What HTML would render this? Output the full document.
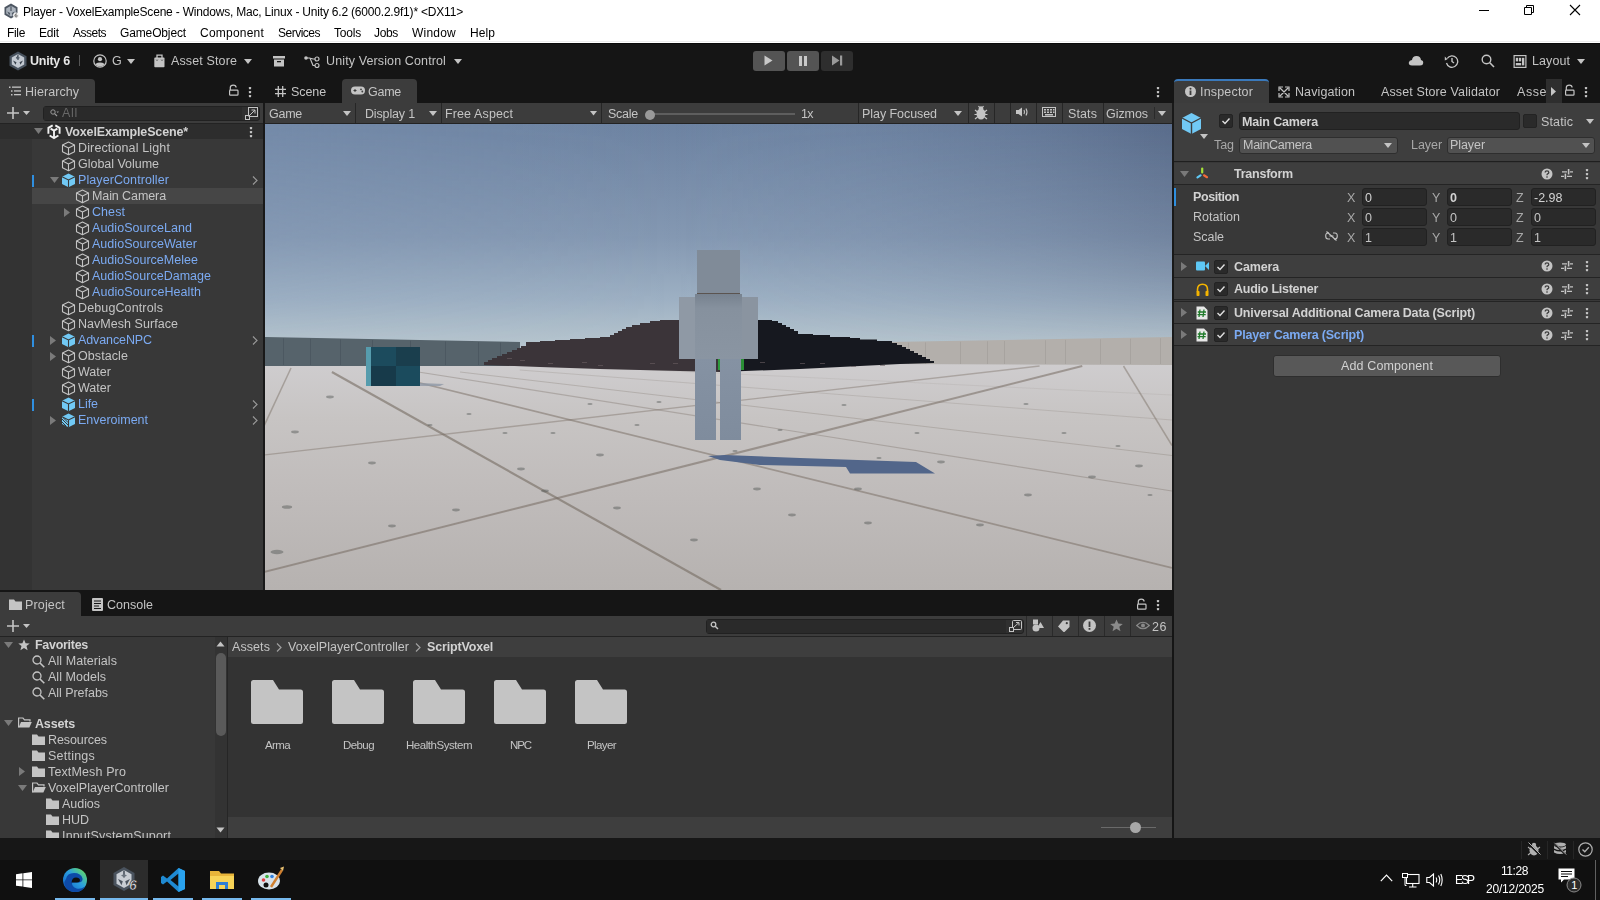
<!DOCTYPE html>
<html><head><meta charset="utf-8">
<style>
*{box-sizing:border-box;margin:0;padding:0}
html,body{width:1600px;height:900px;overflow:hidden;background:#191919;font-family:"Liberation Sans",sans-serif;color:#c4c4c4}
.a{position:absolute;display:block}
.t{position:absolute;white-space:nowrap;line-height:1;will-change:transform}
</style></head><body>
<div class="a" style="left:0px;top:0px;width:1600px;height:43px;background:#ffffff;"></div>
<div class="a" style="left:0px;top:41px;width:1600px;height:1px;background:#ececec;"></div>
<svg class="a" style="left:3px;top:3px;" width="16" height="16" viewBox="0 0 16 16"><path d="M8 0.5L14.5 4.2V11.8L8 15.5L1.5 11.8V4.2Z" fill="#4d5662"/><path d="M8 2.8L12.8 5.6V10.6L8 13.4L3.2 10.6V5.6Z" fill="#aab2bc"/><path d="M7.4 3.2H8.6V8H7.4Z M4.2 8.5L7.2 10L6.3 12.4Z M11.8 8.5L8.8 10L9.7 12.4Z" fill="#4d5662"/><circle cx="13" cy="12.3" r="2.9" fill="#f2f2f2"/><path d="M13.6 10.6Q12 10.8 12 12.6Q12 14 13.1 14Q14.2 14 14.2 12.9Q14.2 11.9 13.1 11.9Q12.4 11.9 12.1 12.5" fill="none" stroke="#555" stroke-width="0.8"/></svg>
<div class="t" style="left:23px;top:5.84px;font-size:12px;color:#000;letter-spacing:-0.198px;">Player - VoxelExampleScene - Windows, Mac, Linux - Unity 6.2 (6000.2.9f1)* &lt;DX11&gt;</div>
<div class="t" style="left:7px;top:26.84px;font-size:12px;color:#000;letter-spacing:-0.334px;">File</div>
<div class="t" style="left:39px;top:26.84px;font-size:12px;color:#000;letter-spacing:-0.170px;">Edit</div>
<div class="t" style="left:73px;top:26.84px;font-size:12px;color:#000;letter-spacing:-0.502px;">Assets</div>
<div class="t" style="left:120px;top:26.84px;font-size:12px;color:#000;letter-spacing:-0.136px;">GameObject</div>
<div class="t" style="left:200px;top:26.84px;font-size:12px;color:#000;letter-spacing:0.218px;">Component</div>
<div class="t" style="left:278px;top:26.84px;font-size:12px;color:#000;letter-spacing:-0.502px;">Services</div>
<div class="t" style="left:334px;top:26.84px;font-size:12px;color:#000;letter-spacing:-0.203px;">Tools</div>
<div class="t" style="left:374px;top:26.84px;font-size:12px;color:#000;letter-spacing:-0.337px;">Jobs</div>
<div class="t" style="left:412px;top:26.84px;font-size:12px;color:#000;letter-spacing:0.220px;">Window</div>
<div class="t" style="left:470px;top:26.84px;font-size:12px;color:#000;letter-spacing:0.080px;">Help</div>
<div class="a" style="left:1479px;top:10px;width:10px;height:1px;background:#000;"></div>
<svg class="a" style="left:1522px;top:4px;" width="12" height="12" viewBox="0 0 12 12"><path d="M2.5 3.5H9.5V10.5H2.5Z M4.5 3.5V1.5H11.5V8.5H9.5" fill="none" stroke="#000" stroke-width="1"/></svg>
<svg class="a" style="left:1569px;top:4px;" width="12" height="12" viewBox="0 0 12 12"><path d="M1 1L11 11M11 1L1 11" stroke="#000" stroke-width="1.1"/></svg>
<div class="a" style="left:0px;top:43px;width:1600px;height:795px;background:#151515;"></div>
<div class="a" style="left:0px;top:43px;width:1600px;height:1px;background:#0a0a0a;"></div>
<svg class="a" style="left:9px;top:51px;" width="18" height="20" viewBox="0 0 18 20"><path d="M9 0.5L17.5 5.3V14.7L9 19.5L0.5 14.7V5.3Z" fill="#48525e"/><path d="M9 3L15.2 6.5V13.5L9 17L2.8 13.5V6.5Z" fill="#c3c9d1"/><path d="M9 4.2V8.2L6.8 7Z M9 8.2L11.2 7Z" fill="#48525e"/><path d="M8.4 3.6H9.6V9H8.4Z" fill="#48525e"/><path d="M4 9.5L7.5 11.3L6.5 13.8Z M14 9.5L10.5 11.3L11.5 13.8Z" fill="#3a434e"/><path d="M6.8 6.8L9 8.2L11.2 6.8L9 6Z" fill="#5a6470"/></svg>
<div class="t" style="left:30px;top:55.42px;font-size:12.5px;color:#e6e6e6;font-weight:bold;letter-spacing:-0.239px;">Unity 6</div>
<div class="a" style="left:79px;top:55px;width:1px;height:11px;background:#555;"></div>
<svg class="a" style="left:93px;top:54px;" width="14" height="14" viewBox="0 0 14 14"><defs><clipPath id="acc"><circle cx="7" cy="7" r="5.6"/></clipPath></defs><circle cx="7" cy="7" r="6.2" fill="none" stroke="#c4c4c4" stroke-width="1.2"/><circle cx="7" cy="5.2" r="2.1" fill="#c4c4c4"/><g clip-path="url(#acc)"><ellipse cx="7" cy="13" rx="6" ry="4.6" fill="#c4c4c4"/></g></svg>
<div class="t" style="left:112px;top:55.42px;font-size:12.5px;color:#c4c4c4;">G</div>
<svg class="a" style="left:127px;top:59px;" width="8" height="5" viewBox="0 0 8 5"><path d="M0 0H8L4.0 5Z" fill="#c4c4c4"/></svg>
<svg class="a" style="left:154px;top:54px;" width="11" height="14" viewBox="0 0 11 14"><path d="M3 4V1.2H8V4" fill="none" stroke="#c4c4c4" stroke-width="1.3"/><rect x="0.3" y="3.6" width="10.2" height="9.6" rx="0.8" fill="#c4c4c4"/><path d="M2.2 5.6L3 6.6L3.8 5.6M7.2 5.6L8 6.6L8.8 5.6" fill="none" stroke="#151515" stroke-width="0.6"/></svg>
<div class="t" style="left:171px;top:55.42px;font-size:12.5px;color:#c4c4c4;letter-spacing:0.126px;">Asset Store</div>
<svg class="a" style="left:244px;top:59px;" width="8" height="5" viewBox="0 0 8 5"><path d="M0 0H8L4.0 5Z" fill="#c4c4c4"/></svg>
<svg class="a" style="left:273px;top:56px;" width="12" height="11" viewBox="0 0 12 11"><rect x="0" y="0" width="12" height="2.5" fill="#c4c4c4"/><rect x="1" y="3.5" width="10" height="7" fill="#c4c4c4"/><rect x="4" y="5" width="4" height="1.3" fill="#191919"/></svg>
<svg class="a" style="left:304px;top:56px;" width="16" height="12" viewBox="0 0 16 12"><circle cx="2" cy="2" r="1.8" fill="#c4c4c4"/><circle cx="13" cy="3" r="2" fill="none" stroke="#c4c4c4" stroke-width="1.2"/><circle cx="13" cy="9.5" r="2" fill="none" stroke="#c4c4c4" stroke-width="1.2"/><path d="M2 2H6L9 9.5H11M6 2L9 3H11" fill="none" stroke="#c4c4c4" stroke-width="1.2"/></svg>
<div class="t" style="left:326px;top:55.42px;font-size:12.5px;color:#c4c4c4;letter-spacing:0.123px;">Unity Version Control</div>
<svg class="a" style="left:454px;top:59px;" width="8" height="5" viewBox="0 0 8 5"><path d="M0 0H8L4.0 5Z" fill="#c4c4c4"/></svg>
<div class="a" style="left:753px;top:51px;width:32px;height:20px;background:#545454;border-radius:3px"></div>
<div class="a" style="left:787px;top:51px;width:32px;height:20px;background:#545454;border-radius:3px"></div>
<div class="a" style="left:821px;top:51px;width:32px;height:20px;background:#2e2e2e;border-radius:3px"></div>
<svg class="a" style="left:764px;top:55px;" width="9" height="11" viewBox="0 0 9 11"><path d="M0.5 0.5L8.5 5.5L0.5 10.5Z" fill="#c8c8c8"/></svg>
<svg class="a" style="left:799px;top:56px;" width="8" height="10" viewBox="0 0 8 10"><rect x="0" y="0" width="3" height="10" fill="#c8c8c8"/><rect x="5" y="0" width="3" height="10" fill="#c8c8c8"/></svg>
<svg class="a" style="left:832px;top:55px;" width="11" height="11" viewBox="0 0 11 11"><path d="M0 0.5L7.5 5.5L0 10.5Z" fill="#9a9a9a"/><rect x="8" y="0.5" width="2.2" height="10" fill="#9a9a9a"/></svg>
<svg class="a" style="left:1408px;top:55px;" width="16" height="11" viewBox="0 0 16 11"><path d="M4 10.5Q0.5 10.5 0.8 7.5Q1.2 5 4 5Q4.5 1 8.5 1Q12.5 1 13 5Q15.5 5.5 15.2 8Q15 10.5 12 10.5Z" fill="#c4c4c4"/></svg>
<svg class="a" style="left:1444px;top:54px;" width="15" height="14" viewBox="0 0 15 14"><path d="M3.2 4.5A5.7 5.7 0 1 1 2.5 9" fill="none" stroke="#c4c4c4" stroke-width="1.3"/><path d="M0.8 2.5L3.5 5.2L0.8 6.5Z" fill="#c4c4c4"/><path d="M8 4V7.5L10 9" fill="none" stroke="#c4c4c4" stroke-width="1.4"/></svg>
<svg class="a" style="left:1481px;top:54px;" width="14" height="14" viewBox="0 0 14 14"><circle cx="5.5" cy="5.5" r="4.3" fill="none" stroke="#c4c4c4" stroke-width="1.4"/><path d="M8.8 8.8L13 13" stroke="#c4c4c4" stroke-width="1.6"/></svg>
<svg class="a" style="left:1513px;top:54px;" width="14" height="14" viewBox="0 0 14 14"><rect x="1.1" y="1.6" width="11.8" height="11.8" fill="none" stroke="#c4c4c4" stroke-width="1.2"/><rect x="2.8" y="3.8" width="2.3" height="3.6" fill="#c4c4c4"/><rect x="5.9" y="3.8" width="2.3" height="3.6" fill="#c4c4c4"/><rect x="9" y="3.8" width="2.3" height="7.6" fill="#c4c4c4"/><rect x="2.8" y="9" width="5.4" height="2.4" fill="#c4c4c4"/></svg>
<div class="t" style="left:1532px;top:55.42px;font-size:12.5px;color:#c4c4c4;letter-spacing:0.079px;">Layout</div>
<svg class="a" style="left:1577px;top:59px;" width="8" height="5" viewBox="0 0 8 5"><path d="M0 0H8L4.0 5Z" fill="#c4c4c4"/></svg>
<div class="a" style="left:0;top:79px;width:95px;height:24px;background:#3c3c3c;border-radius:0 4px 0 0"></div>
<svg class="a" style="left:9px;top:86px;" width="12" height="10" viewBox="0 0 12 10"><g fill="#c4c4c4"><rect x="0" y="0.5" width="1.5" height="1.5"/><rect x="3" y="0.5" width="9" height="1.3"/><rect x="2" y="4.3" width="1.5" height="1.5"/><rect x="5" y="4.3" width="7" height="1.3"/><rect x="2" y="8" width="1.5" height="1.5"/><rect x="5" y="8" width="7" height="1.3"/></g></svg>
<div class="t" style="left:25px;top:86.42px;font-size:12.5px;color:#c4c4c4;letter-spacing:0.057px;">Hierarchy</div>
<svg class="a" style="left:229px;top:84px;" width="10" height="12" viewBox="0 0 10 12"><path d="M1.3 6V3.6Q1.3 1.1 4.2 1.1Q7.1 1.1 7.1 3.4" fill="none" stroke="#c4c4c4" stroke-width="1.2"/><rect x="0.6" y="6.2" width="8.4" height="5" rx="0.8" fill="none" stroke="#c4c4c4" stroke-width="1.2"/></svg>
<svg class="a" style="left:248px;top:86px;" width="4" height="12" viewBox="0 0 4 12"><rect x="0.9" y="1" width="2.2" height="2.2" rx="0.4" fill="#c4c4c4"/><rect x="0.9" y="5" width="2.2" height="2.2" rx="0.4" fill="#c4c4c4"/><rect x="0.9" y="9" width="2.2" height="2.2" rx="0.4" fill="#c4c4c4"/></svg>
<svg class="a" style="left:275px;top:86px;" width="11" height="11" viewBox="0 0 11 11"><path d="M3.3 0V11M7.7 0V11M0 3.3H11M0 7.7H11" stroke="#c4c4c4" stroke-width="1.3"/></svg>
<div class="t" style="left:291px;top:86.42px;font-size:12.5px;color:#c4c4c4;letter-spacing:-0.088px;">Scene</div>
<div class="a" style="left:342px;top:79px;width:75px;height:24px;background:#3c3c3c;border-radius:4px 4px 0 0"></div>
<svg class="a" style="left:351px;top:86px;" width="14" height="9" viewBox="0 0 14 9"><rect x="0" y="0.5" width="14" height="8" rx="4" fill="#c4c4c4"/><path d="M2.5 4.5H5.5M4 3V6" stroke="#3c3c3c" stroke-width="1"/><circle cx="10" cy="3.3" r="0.9" fill="#3c3c3c"/><circle cx="11.3" cy="5.5" r="0.9" fill="#3c3c3c"/></svg>
<div class="t" style="left:368px;top:86.42px;font-size:12.5px;color:#c4c4c4;letter-spacing:-0.260px;">Game</div>
<svg class="a" style="left:1156px;top:86px;" width="4" height="12" viewBox="0 0 4 12"><rect x="0.9" y="1" width="2.2" height="2.2" rx="0.4" fill="#c4c4c4"/><rect x="0.9" y="5" width="2.2" height="2.2" rx="0.4" fill="#c4c4c4"/><rect x="0.9" y="9" width="2.2" height="2.2" rx="0.4" fill="#c4c4c4"/></svg>
<div class="a" style="left:1174px;top:79px;width:95px;height:24px;background:#3c3c3c;border-radius:4px 4px 0 0;border-top:2px solid #3a79bb"></div>
<svg class="a" style="left:1185px;top:86px;" width="11" height="11" viewBox="0 0 11 11"><circle cx="5.5" cy="5.5" r="5.5" fill="#c4c4c4"/><rect x="4.6" y="4.5" width="1.8" height="4.5" fill="#3c3c3c"/><circle cx="5.5" cy="2.8" r="1" fill="#3c3c3c"/></svg>
<div class="t" style="left:1200px;top:86.42px;font-size:12.5px;color:#c4c4c4;letter-spacing:0.176px;">Inspector</div>
<svg class="a" style="left:1278px;top:86px;" width="12" height="12" viewBox="0 0 12 12"><path d="M1 5V1H5M7 1H11V5M11 7V11H7M5 11H1V7M2 2L10 10M10 2L2 10" fill="none" stroke="#c4c4c4" stroke-width="1.2"/></svg>
<div class="t" style="left:1295px;top:86.42px;font-size:12.5px;color:#c4c4c4;letter-spacing:0.094px;">Navigation</div>
<div class="t" style="left:1381px;top:86.42px;font-size:12.5px;color:#c4c4c4;letter-spacing:0.120px;">Asset Store Validator</div>
<div class="t" style="left:1517px;top:86.42px;font-size:12.5px;color:#c4c4c4;letter-spacing:0.548px;overflow:hidden;width:29px;">Asset</div>
<div class="a" style="left:1546px;top:79px;width:16px;height:24px;background:#2e2e2e;"></div>
<svg class="a" style="left:1551px;top:87px;" width="5" height="9" viewBox="0 0 5 9"><path d="M0 0L5 4.5L0 9Z" fill="#c4c4c4"/></svg>
<svg class="a" style="left:1565px;top:84px;" width="10" height="12" viewBox="0 0 10 12"><path d="M1.3 6V3.6Q1.3 1.1 4.2 1.1Q7.1 1.1 7.1 3.4" fill="none" stroke="#c4c4c4" stroke-width="1.2"/><rect x="0.6" y="6.2" width="8.4" height="5" rx="0.8" fill="none" stroke="#c4c4c4" stroke-width="1.2"/></svg>
<svg class="a" style="left:1584px;top:86px;" width="4" height="12" viewBox="0 0 4 12"><rect x="0.9" y="1" width="2.2" height="2.2" rx="0.4" fill="#c4c4c4"/><rect x="0.9" y="5" width="2.2" height="2.2" rx="0.4" fill="#c4c4c4"/><rect x="0.9" y="9" width="2.2" height="2.2" rx="0.4" fill="#c4c4c4"/></svg>
<div class="a" style="left:0px;top:103px;width:263px;height:487px;background:#383838;"></div>
<div class="a" style="left:0px;top:103px;width:263px;height:20px;background:#3c3c3c;"></div>
<svg class="a" style="left:7px;top:107px;" width="12" height="12" viewBox="0 0 12 12"><path d="M6 0V12M0 6H12" stroke="#c4c4c4" stroke-width="1.6"/></svg>
<svg class="a" style="left:23px;top:111px;" width="7" height="4" viewBox="0 0 7 4"><path d="M0 0H7L3.5 4Z" fill="#c4c4c4"/></svg>
<div class="a" style="left:43px;top:106px;width:217px;height:15px;background:#303030;border:1px solid #212121;border-radius:3px"></div>
<div class="a" style="left:44px;top:107px;width:198px;height:13px;background:#2a2a2a;"></div>
<svg class="a" style="left:50px;top:109px;" width="9" height="8" viewBox="0 0 9 8"><circle cx="3" cy="3" r="2.2" fill="none" stroke="#9a9a9a" stroke-width="1"/><path d="M4.6 4.6L7 7" stroke="#9a9a9a" stroke-width="1.2"/><path d="M6.5 2.5H9L7.75 4Z" fill="#9a9a9a"/></svg>
<div class="t" style="left:62px;top:106.92px;font-size:12.5px;color:#686868;letter-spacing:0.703px;">All</div>
<svg class="a" style="left:245px;top:107px;" width="13" height="13" viewBox="0 0 13 13"><rect x="3.5" y="0.5" width="9" height="9" fill="none" stroke="#c4c4c4" stroke-width="1"/><rect x="0.5" y="8.5" width="4" height="4" fill="#2a2a2a" stroke="#c4c4c4" stroke-width="1"/><path d="M3.5 9.5L10 3M6.5 3H10V6.5" fill="none" stroke="#c4c4c4" stroke-width="1"/></svg>
<div class="a" style="left:0px;top:123px;width:263px;height:1px;background:#232323;"></div>
<div class="a" style="left:0px;top:139px;width:32px;height:451px;background:#333333;"></div>
<div class="a" style="left:0px;top:124px;width:263px;height:15px;background:#2d2d2d;"></div>
<svg class="a" style="left:34px;top:128px;" width="9" height="6" viewBox="0 0 9 6"><path d="M0 0H9L4.5 6Z" fill="#7a7a7a"/></svg>
<svg class="a" style="left:44px;top:122px;" width="20" height="18" viewBox="0 0 20 18"><g fill="none" stroke="#f0f0f0" stroke-width="1.9" stroke-linejoin="miter"><path d="M8.7 3.4L4.4 5.9V11.8"/><path d="M11.3 3.4L15.6 5.9V11.8"/><path d="M5.6 13.5L10 16.1L14.4 13.5"/><path d="M6.6 6.6L10 8.6L13.4 6.6M10 8.6V15"/></g></svg>
<div class="t" style="left:65px;top:126.42px;font-size:12.5px;color:#d2d2d2;font-weight:bold;letter-spacing:-0.140px;">VoxelExampleScene*</div>
<svg class="a" style="left:249px;top:126px;" width="4" height="12" viewBox="0 0 4 12"><rect x="0.9" y="1" width="2.2" height="2.2" rx="0.4" fill="#c4c4c4"/><rect x="0.9" y="5" width="2.2" height="2.2" rx="0.4" fill="#c4c4c4"/><rect x="0.9" y="9" width="2.2" height="2.2" rx="0.4" fill="#c4c4c4"/></svg>
<svg class="a" style="left:61px;top:141px;" width="15" height="15" viewBox="0 0 15 15"><g fill="none" stroke="#c4c4c4" stroke-width="1.1" stroke-linejoin="round"><path d="M7.5 1L13.5 4V10.8L7.5 13.8L1.5 10.8V4Z"/><path d="M1.5 4L7.5 7L13.5 4M7.5 7V13.8"/></g></svg>
<div class="t" style="left:78px;top:142.42px;font-size:12.5px;color:#c4c4c4;letter-spacing:0.140px;">Directional Light</div>
<svg class="a" style="left:61px;top:157px;" width="15" height="15" viewBox="0 0 15 15"><g fill="none" stroke="#c4c4c4" stroke-width="1.1" stroke-linejoin="round"><path d="M7.5 1L13.5 4V10.8L7.5 13.8L1.5 10.8V4Z"/><path d="M1.5 4L7.5 7L13.5 4M7.5 7V13.8"/></g></svg>
<div class="t" style="left:78px;top:158.42px;font-size:12.5px;color:#c4c4c4;letter-spacing:-0.023px;">Global Volume</div>
<svg class="a" style="left:50px;top:177px;" width="9" height="6" viewBox="0 0 9 6"><path d="M0 0H9L4.5 6Z" fill="#7a7a7a"/></svg>
<svg class="a" style="left:61px;top:173px;" width="15" height="15" viewBox="0 0 15 15"><path d="M7.5 0.5L14 3.7V11L7.5 14.3L1 11V3.7Z" fill="#71c9f5"/><g fill="none" stroke="#383838" stroke-width="1.1"><path d="M1 3.7L7.5 7L14 3.7M7.5 7V14.3"/></g></svg>
<div class="a" style="left:32px;top:175px;width:2px;height:12px;background:#2f8fe0;"></div>
<svg class="a" style="left:252px;top:176px;" width="6" height="9" viewBox="0 0 6 9"><path d="M1 0.5L5 4.5L1 8.5" fill="none" stroke="#9a9a9a" stroke-width="1.2"/></svg>
<div class="t" style="left:78px;top:174.42px;font-size:12.5px;color:#7baaf2;letter-spacing:0.086px;">PlayerController</div>
<div class="a" style="left:32px;top:188px;width:231px;height:16px;background:#464646;"></div>
<svg class="a" style="left:75px;top:189px;" width="15" height="15" viewBox="0 0 15 15"><g fill="none" stroke="#c4c4c4" stroke-width="1.1" stroke-linejoin="round"><path d="M7.5 1L13.5 4V10.8L7.5 13.8L1.5 10.8V4Z"/><path d="M1.5 4L7.5 7L13.5 4M7.5 7V13.8"/></g></svg>
<div class="t" style="left:92px;top:190.42px;font-size:12.5px;color:#c4c4c4;letter-spacing:-0.093px;">Main Camera</div>
<svg class="a" style="left:64px;top:208px;" width="6" height="9" viewBox="0 0 6 9"><path d="M0 0L6 4.5L0 9Z" fill="#7a7a7a"/></svg>
<svg class="a" style="left:75px;top:205px;" width="15" height="15" viewBox="0 0 15 15"><g fill="none" stroke="#c4c4c4" stroke-width="1.1" stroke-linejoin="round"><path d="M7.5 1L13.5 4V10.8L7.5 13.8L1.5 10.8V4Z"/><path d="M1.5 4L7.5 7L13.5 4M7.5 7V13.8"/></g></svg>
<div class="t" style="left:92px;top:206.42px;font-size:12.5px;color:#7baaf2;letter-spacing:0.069px;">Chest</div>
<svg class="a" style="left:75px;top:221px;" width="15" height="15" viewBox="0 0 15 15"><g fill="none" stroke="#c4c4c4" stroke-width="1.1" stroke-linejoin="round"><path d="M7.5 1L13.5 4V10.8L7.5 13.8L1.5 10.8V4Z"/><path d="M1.5 4L7.5 7L13.5 4M7.5 7V13.8"/></g></svg>
<div class="t" style="left:92px;top:222.42px;font-size:12.5px;color:#7baaf2;letter-spacing:0.041px;">AudioSourceLand</div>
<svg class="a" style="left:75px;top:237px;" width="15" height="15" viewBox="0 0 15 15"><g fill="none" stroke="#c4c4c4" stroke-width="1.1" stroke-linejoin="round"><path d="M7.5 1L13.5 4V10.8L7.5 13.8L1.5 10.8V4Z"/><path d="M1.5 4L7.5 7L13.5 4M7.5 7V13.8"/></g></svg>
<div class="t" style="left:92px;top:238.42px;font-size:12.5px;color:#7baaf2;letter-spacing:0.035px;">AudioSourceWater</div>
<svg class="a" style="left:75px;top:253px;" width="15" height="15" viewBox="0 0 15 15"><g fill="none" stroke="#c4c4c4" stroke-width="1.1" stroke-linejoin="round"><path d="M7.5 1L13.5 4V10.8L7.5 13.8L1.5 10.8V4Z"/><path d="M1.5 4L7.5 7L13.5 4M7.5 7V13.8"/></g></svg>
<div class="t" style="left:92px;top:254.42px;font-size:12.5px;color:#7baaf2;letter-spacing:0.024px;">AudioSourceMelee</div>
<svg class="a" style="left:75px;top:269px;" width="15" height="15" viewBox="0 0 15 15"><g fill="none" stroke="#c4c4c4" stroke-width="1.1" stroke-linejoin="round"><path d="M7.5 1L13.5 4V10.8L7.5 13.8L1.5 10.8V4Z"/><path d="M1.5 4L7.5 7L13.5 4M7.5 7V13.8"/></g></svg>
<div class="t" style="left:92px;top:270.42px;font-size:12.5px;color:#7baaf2;letter-spacing:0.011px;">AudioSourceDamage</div>
<svg class="a" style="left:75px;top:285px;" width="15" height="15" viewBox="0 0 15 15"><g fill="none" stroke="#c4c4c4" stroke-width="1.1" stroke-linejoin="round"><path d="M7.5 1L13.5 4V10.8L7.5 13.8L1.5 10.8V4Z"/><path d="M1.5 4L7.5 7L13.5 4M7.5 7V13.8"/></g></svg>
<div class="t" style="left:92px;top:286.42px;font-size:12.5px;color:#7baaf2;letter-spacing:0.076px;">AudioSourceHealth</div>
<svg class="a" style="left:61px;top:301px;" width="15" height="15" viewBox="0 0 15 15"><g fill="none" stroke="#c4c4c4" stroke-width="1.1" stroke-linejoin="round"><path d="M7.5 1L13.5 4V10.8L7.5 13.8L1.5 10.8V4Z"/><path d="M1.5 4L7.5 7L13.5 4M7.5 7V13.8"/></g></svg>
<div class="t" style="left:78px;top:302.42px;font-size:12.5px;color:#c4c4c4;letter-spacing:0.125px;">DebugControls</div>
<svg class="a" style="left:61px;top:317px;" width="15" height="15" viewBox="0 0 15 15"><g fill="none" stroke="#c4c4c4" stroke-width="1.1" stroke-linejoin="round"><path d="M7.5 1L13.5 4V10.8L7.5 13.8L1.5 10.8V4Z"/><path d="M1.5 4L7.5 7L13.5 4M7.5 7V13.8"/></g></svg>
<div class="t" style="left:78px;top:318.42px;font-size:12.5px;color:#c4c4c4;letter-spacing:0.044px;">NavMesh Surface</div>
<svg class="a" style="left:50px;top:336px;" width="6" height="9" viewBox="0 0 6 9"><path d="M0 0L6 4.5L0 9Z" fill="#7a7a7a"/></svg>
<svg class="a" style="left:61px;top:333px;" width="15" height="15" viewBox="0 0 15 15"><path d="M7.5 0.5L14 3.7V11L7.5 14.3L1 11V3.7Z" fill="#71c9f5"/><g fill="none" stroke="#383838" stroke-width="1.1"><path d="M1 3.7L7.5 7L14 3.7M7.5 7V14.3"/></g></svg>
<div class="a" style="left:32px;top:335px;width:2px;height:12px;background:#2f8fe0;"></div>
<svg class="a" style="left:252px;top:336px;" width="6" height="9" viewBox="0 0 6 9"><path d="M1 0.5L5 4.5L1 8.5" fill="none" stroke="#9a9a9a" stroke-width="1.2"/></svg>
<div class="t" style="left:78px;top:334.42px;font-size:12.5px;color:#7baaf2;letter-spacing:-0.104px;">AdvanceNPC</div>
<svg class="a" style="left:50px;top:352px;" width="6" height="9" viewBox="0 0 6 9"><path d="M0 0L6 4.5L0 9Z" fill="#7a7a7a"/></svg>
<svg class="a" style="left:61px;top:349px;" width="15" height="15" viewBox="0 0 15 15"><g fill="none" stroke="#c4c4c4" stroke-width="1.1" stroke-linejoin="round"><path d="M7.5 1L13.5 4V10.8L7.5 13.8L1.5 10.8V4Z"/><path d="M1.5 4L7.5 7L13.5 4M7.5 7V13.8"/></g></svg>
<div class="t" style="left:78px;top:350.42px;font-size:12.5px;color:#c4c4c4;letter-spacing:0.084px;">Obstacle</div>
<svg class="a" style="left:61px;top:365px;" width="15" height="15" viewBox="0 0 15 15"><g fill="none" stroke="#c4c4c4" stroke-width="1.1" stroke-linejoin="round"><path d="M7.5 1L13.5 4V10.8L7.5 13.8L1.5 10.8V4Z"/><path d="M1.5 4L7.5 7L13.5 4M7.5 7V13.8"/></g></svg>
<div class="t" style="left:78px;top:366.42px;font-size:12.5px;color:#c4c4c4;letter-spacing:0.025px;">Water</div>
<svg class="a" style="left:61px;top:381px;" width="15" height="15" viewBox="0 0 15 15"><g fill="none" stroke="#c4c4c4" stroke-width="1.1" stroke-linejoin="round"><path d="M7.5 1L13.5 4V10.8L7.5 13.8L1.5 10.8V4Z"/><path d="M1.5 4L7.5 7L13.5 4M7.5 7V13.8"/></g></svg>
<div class="t" style="left:78px;top:382.42px;font-size:12.5px;color:#c4c4c4;letter-spacing:0.025px;">Water</div>
<svg class="a" style="left:61px;top:397px;" width="15" height="15" viewBox="0 0 15 15"><path d="M7.5 0.5L14 3.7V11L7.5 14.3L1 11V3.7Z" fill="#71c9f5"/><g fill="none" stroke="#383838" stroke-width="1.1"><path d="M1 3.7L7.5 7L14 3.7M7.5 7V14.3"/></g></svg>
<div class="a" style="left:32px;top:399px;width:2px;height:12px;background:#2f8fe0;"></div>
<svg class="a" style="left:252px;top:400px;" width="6" height="9" viewBox="0 0 6 9"><path d="M1 0.5L5 4.5L1 8.5" fill="none" stroke="#9a9a9a" stroke-width="1.2"/></svg>
<div class="t" style="left:78px;top:398.42px;font-size:12.5px;color:#7baaf2;letter-spacing:-0.038px;">Life</div>
<svg class="a" style="left:50px;top:416px;" width="6" height="9" viewBox="0 0 6 9"><path d="M0 0L6 4.5L0 9Z" fill="#7a7a7a"/></svg>
<svg class="a" style="left:61px;top:413px;" width="15" height="15" viewBox="0 0 15 15"><path d="M7.5 0.5L14 3.7V11L7.5 14.3L1 11V3.7Z" fill="#71c9f5"/><g fill="none" stroke="#383838" stroke-width="1.1"><path d="M1 3.7L7.5 7L14 3.7M7.5 7V14.3"/></g></svg>
<svg class="a" style="left:61px;top:417px;" width="8" height="9" viewBox="0 0 8 9"><path d="M0 1L7 8M0 4L5 9M0 7L2 9M2 0.5L7 5.5" stroke="#383838" stroke-width="1"/></svg>
<svg class="a" style="left:252px;top:416px;" width="6" height="9" viewBox="0 0 6 9"><path d="M1 0.5L5 4.5L1 8.5" fill="none" stroke="#9a9a9a" stroke-width="1.2"/></svg>
<div class="t" style="left:78px;top:414.42px;font-size:12.5px;color:#7baaf2;letter-spacing:-0.015px;">Enveroiment</div>
<div class="a" style="left:263px;top:103px;width:2px;height:487px;background:#191919;"></div>
<div class="a" style="left:265px;top:103px;width:907px;height:21px;background:#3c3c3c;"></div>
<div class="a" style="left:265px;top:123px;width:907px;height:1px;background:#232323;"></div>
<div class="a" style="left:355px;top:103px;width:1px;height:20px;background:#262626;"></div>
<div class="a" style="left:441px;top:103px;width:1px;height:20px;background:#262626;"></div>
<div class="a" style="left:601px;top:103px;width:1px;height:20px;background:#262626;"></div>
<div class="a" style="left:858px;top:103px;width:1px;height:20px;background:#262626;"></div>
<div class="a" style="left:968px;top:103px;width:1px;height:20px;background:#262626;"></div>
<div class="a" style="left:994px;top:103px;width:1px;height:20px;background:#262626;"></div>
<div class="a" style="left:1010px;top:103px;width:1px;height:20px;background:#262626;"></div>
<div class="a" style="left:1036px;top:103px;width:1px;height:20px;background:#262626;"></div>
<div class="a" style="left:1062px;top:103px;width:1px;height:20px;background:#262626;"></div>
<div class="a" style="left:1103px;top:103px;width:1px;height:20px;background:#262626;"></div>
<div class="t" style="left:269px;top:108.42px;font-size:12.5px;color:#c4c4c4;letter-spacing:-0.260px;">Game</div>
<svg class="a" style="left:343px;top:111px;" width="8" height="5" viewBox="0 0 8 5"><path d="M0 0H8L4.0 5Z" fill="#c4c4c4"/></svg>
<div class="t" style="left:365px;top:108.42px;font-size:12.5px;color:#c4c4c4;letter-spacing:-0.157px;">Display 1</div>
<svg class="a" style="left:429px;top:111px;" width="8" height="5" viewBox="0 0 8 5"><path d="M0 0H8L4.0 5Z" fill="#c4c4c4"/></svg>
<div class="t" style="left:445px;top:108.42px;font-size:12.5px;color:#c4c4c4;letter-spacing:0.118px;">Free Aspect</div>
<svg class="a" style="left:590px;top:111px;" width="7" height="4.5" viewBox="0 0 7 4.5"><path d="M0 0H7L3.5 4.5Z" fill="#c4c4c4"/></svg>
<div class="t" style="left:608px;top:108.42px;font-size:12.5px;color:#c4c4c4;letter-spacing:-0.254px;">Scale</div>
<div class="a" style="left:650px;top:113px;width:145px;height:2px;background:#5e5e5e;"></div>
<div class="a" style="left:645px;top:109.5px;width:10px;height:10px;border-radius:50%;background:#999"></div>
<div class="t" style="left:801px;top:108.42px;font-size:12.5px;color:#c4c4c4;letter-spacing:-0.601px;">1x</div>
<div class="t" style="left:862px;top:108.42px;font-size:12.5px;color:#c4c4c4;letter-spacing:-0.061px;">Play Focused</div>
<svg class="a" style="left:954px;top:111px;" width="8" height="5" viewBox="0 0 8 5"><path d="M0 0H8L4.0 5Z" fill="#c4c4c4"/></svg>
<svg class="a" style="left:974px;top:105px;" width="14" height="15" viewBox="0 0 14 15"><ellipse cx="7" cy="9" rx="4.5" ry="5.5" fill="#c4c4c4"/><circle cx="7" cy="3.5" r="2.3" fill="#c4c4c4"/><path d="M1 5L3.5 7M13 5L10.5 7M0.5 9.5H3M13.5 9.5H11M1 14L3.5 12M13 14L10.5 12M4.5 1L5.5 2.5M9.5 1L8.5 2.5" stroke="#c4c4c4" stroke-width="1.2"/></svg>
<svg class="a" style="left:1016px;top:107px;" width="13" height="10" viewBox="0 0 13 10"><path d="M0 3H2.5L6 0.5V9.5L2.5 7H0Z" fill="#c4c4c4"/><path d="M8 3Q9 5 8 7M10 1.5Q12 5 10 8.5" fill="none" stroke="#c4c4c4" stroke-width="1.1"/></svg>
<svg class="a" style="left:1042px;top:107px;" width="14" height="10" viewBox="0 0 14 10"><rect x="0.5" y="0.5" width="13" height="9" fill="none" stroke="#c4c4c4" stroke-width="1"/><g fill="#c4c4c4"><rect x="2" y="2" width="2" height="1.5"/><rect x="5" y="2" width="2" height="1.5"/><rect x="8" y="2" width="2" height="1.5"/><rect x="11" y="2" width="1.5" height="1.5"/><rect x="2" y="4.5" width="2" height="1.5"/><rect x="5" y="4.5" width="2" height="1.5"/><rect x="8" y="4.5" width="2" height="1.5"/><rect x="11" y="4.5" width="1.5" height="1.5"/><rect x="3" y="7" width="8" height="1.5"/></g></svg>
<div class="t" style="left:1068px;top:108.42px;font-size:12.5px;color:#c4c4c4;letter-spacing:0.103px;">Stats</div>
<div class="t" style="left:1106px;top:108.42px;font-size:12.5px;color:#c4c4c4;letter-spacing:-0.061px;">Gizmos</div>
<div class="a" style="left:1154px;top:107px;width:1px;height:12px;background:#2a2a2a;"></div>
<svg class="a" style="left:1158px;top:111px;" width="8" height="5" viewBox="0 0 8 5"><path d="M0 0H8L4.0 5Z" fill="#c4c4c4"/></svg>
<div class="a" style="left:1172px;top:103px;width:2px;height:487px;background:#191919;"></div>
<div class="a" style="left:1174px;top:103px;width:426px;height:735px;background:#383838;"></div>
<div class="a" style="left:1174px;top:103px;width:426px;height:59px;background:#3e3e3e;"></div>
<svg class="a" style="left:1181px;top:112px;" width="22" height="24" viewBox="0 0 22 24"><path d="M10.5 1L20 6V17L10.5 22L1 17V6Z" fill="#71c9f5"/><path d="M1 6L10.5 11L20 6M10.5 11V22" fill="none" stroke="#3e3e3e" stroke-width="1.4"/></svg>
<svg class="a" style="left:1200px;top:134px;" width="8" height="5" viewBox="0 0 8 5"><path d="M0 0H8L4.0 5Z" fill="#c4c4c4"/></svg>
<div class="a" style="left:1219px;top:114px;width:14px;height:14px;background:#2a2a2a;border:1px solid #232323;border-radius:2px"></div>
<svg class="a" style="left:1221px;top:116px;" width="10" height="10" viewBox="0 0 10 10"><path d="M1.5 5L4 7.5L8.5 2.5" fill="none" stroke="#e0e0e0" stroke-width="1.4"/></svg>
<div class="a" style="left:1239px;top:112px;width:281px;height:18px;background:#2a2a2a;border:1px solid #212121;border-radius:3px"></div>
<div class="t" style="left:1242px;top:116.42px;font-size:12.5px;color:#d2d2d2;font-weight:bold;letter-spacing:-0.164px;">Main Camera</div>
<div class="a" style="left:1523px;top:114px;width:14px;height:14px;background:#2a2a2a;border:1px solid #232323;border-radius:2px"></div>
<div class="t" style="left:1541px;top:116.42px;font-size:12.5px;color:#c4c4c4;letter-spacing:0.123px;">Static</div>
<svg class="a" style="left:1586px;top:119px;" width="8" height="5" viewBox="0 0 8 5"><path d="M0 0H8L4.0 5Z" fill="#c4c4c4"/></svg>
<div class="t" style="left:1214px;top:139.42px;font-size:12.5px;color:#a8a8a8;letter-spacing:-0.051px;">Tag</div>
<div class="a" style="left:1239px;top:137px;width:159px;height:17px;background:#515151;border:1px solid #2e2e2e;border-radius:3px"></div>
<div class="t" style="left:1243px;top:139.42px;font-size:12.5px;color:#c4c4c4;letter-spacing:-0.255px;">MainCamera</div>
<svg class="a" style="left:1384px;top:143px;" width="8" height="5" viewBox="0 0 8 5"><path d="M0 0H8L4.0 5Z" fill="#c4c4c4"/></svg>
<div class="t" style="left:1411px;top:139.42px;font-size:12.5px;color:#a8a8a8;letter-spacing:-0.053px;">Layer</div>
<div class="a" style="left:1447px;top:137px;width:148px;height:17px;background:#515151;border:1px solid #2e2e2e;border-radius:3px"></div>
<div class="t" style="left:1450px;top:139.42px;font-size:12.5px;color:#c4c4c4;letter-spacing:-0.072px;">Player</div>
<svg class="a" style="left:1582px;top:143px;" width="8" height="5" viewBox="0 0 8 5"><path d="M0 0H8L4.0 5Z" fill="#c4c4c4"/></svg>
<div class="a" style="left:1174px;top:161px;width:426px;height:1px;background:#1f1f1f;"></div>
<div class="a" style="left:1174px;top:163px;width:426px;height:21px;background:#3e3e3e;"></div>
<div class="a" style="left:1174px;top:184px;width:426px;height:1px;background:#242424;"></div>
<svg class="a" style="left:1180px;top:170.5px;" width="9" height="6" viewBox="0 0 9 6"><path d="M0 0H9L4.5 6Z" fill="#7a7a7a"/></svg>
<svg class="a" style="left:1196px;top:166.5px;" width="14" height="13" viewBox="0 0 14 13"><path d="M6.2 1.5V5.5" stroke="#a6e23a" stroke-width="2.2" stroke-linecap="round"/><path d="M4.5 8.3L1.5 10.3" stroke="#5ec8f5" stroke-width="2.2" stroke-linecap="round"/><path d="M8 8.3L11 10.2" stroke="#f26b3a" stroke-width="2.2" stroke-linecap="round"/></svg>
<div class="t" style="left:1234px;top:168.42px;font-size:12.5px;color:#d2d2d2;font-weight:bold;letter-spacing:-0.236px;">Transform</div>
<svg class="a" style="left:1541px;top:167.5px;" width="12" height="12" viewBox="0 0 12 12"><circle cx="6" cy="6" r="5.5" fill="#c4c4c4"/><path d="M4.2 4.6Q4.2 2.8 6 2.8Q7.8 2.8 7.8 4.4Q7.8 5.4 6.6 5.9Q6 6.2 6 7.3" fill="none" stroke="#3e3e3e" stroke-width="1.3"/><rect x="5.3" y="8.3" width="1.4" height="1.4" fill="#3e3e3e"/></svg>
<svg class="a" style="left:1561px;top:167.5px;" width="12" height="12" viewBox="0 0 12 12"><path d="M1 3.8H6M9 3.8H12M0 8.3H3M6 8.3H11" stroke="#c4c4c4" stroke-width="1.3"/><rect x="6.8" y="1" width="1.6" height="5.5" fill="#c4c4c4"/><rect x="3.6" y="5.6" width="1.6" height="5.5" fill="#c4c4c4"/></svg>
<svg class="a" style="left:1585px;top:167.5px;" width="4" height="12" viewBox="0 0 4 12"><rect x="0.9" y="1" width="2.2" height="2.2" rx="0.4" fill="#c4c4c4"/><rect x="0.9" y="5" width="2.2" height="2.2" rx="0.4" fill="#c4c4c4"/><rect x="0.9" y="9" width="2.2" height="2.2" rx="0.4" fill="#c4c4c4"/></svg>
<div class="a" style="left:1174px;top:188px;width:2px;height:18px;background:#2f8fe0;"></div>
<div class="t" style="left:1193px;top:191.42px;font-size:12.5px;color:#d2d2d2;font-weight:bold;letter-spacing:-0.413px;">Position</div>
<div class="t" style="left:1193px;top:211.42px;font-size:12.5px;color:#c4c4c4;letter-spacing:0.055px;">Rotation</div>
<div class="t" style="left:1193px;top:231.42px;font-size:12.5px;color:#c4c4c4;letter-spacing:-0.054px;">Scale</div>
<svg class="a" style="left:1325px;top:231px;" width="13" height="10" viewBox="0 0 13 10"><path d="M4 2H3Q0.7 2 0.7 5Q0.7 8 3 8H5M8 2H10Q12.3 2 12.3 5Q12.3 8 10 8H9M4.5 5H8.5" fill="none" stroke="#c4c4c4" stroke-width="1.1"/><path d="M1.5 0.5L11.5 9.5" stroke="#c4c4c4" stroke-width="1.1"/></svg>
<div class="t" style="left:1347px;top:191.92px;font-size:12.5px;color:#a8a8a8;">X</div>
<div class="a" style="left:1362px;top:188px;width:65px;height:18px;background:#2a2a2a;border:1px solid #212121;border-radius:3px"></div>
<div class="t" style="left:1365px;top:191.92px;font-size:12.5px;color:#d2d2d2;">0</div>
<div class="t" style="left:1432px;top:191.92px;font-size:12.5px;color:#a8a8a8;">Y</div>
<div class="a" style="left:1447px;top:188px;width:65px;height:18px;background:#2a2a2a;border:1px solid #212121;border-radius:3px"></div>
<div class="t" style="left:1450px;top:191.92px;font-size:12.5px;color:#d2d2d2;font-weight:bold;">0</div>
<div class="t" style="left:1516px;top:191.92px;font-size:12.5px;color:#a8a8a8;">Z</div>
<div class="a" style="left:1531px;top:188px;width:65px;height:18px;background:#2a2a2a;border:1px solid #212121;border-radius:3px"></div>
<div class="t" style="left:1534px;top:191.92px;font-size:12.5px;color:#d2d2d2;">-2.98</div>
<div class="t" style="left:1347px;top:211.92px;font-size:12.5px;color:#a8a8a8;">X</div>
<div class="a" style="left:1362px;top:208px;width:65px;height:18px;background:#2a2a2a;border:1px solid #212121;border-radius:3px"></div>
<div class="t" style="left:1365px;top:211.92px;font-size:12.5px;color:#c4c4c4;">0</div>
<div class="t" style="left:1432px;top:211.92px;font-size:12.5px;color:#a8a8a8;">Y</div>
<div class="a" style="left:1447px;top:208px;width:65px;height:18px;background:#2a2a2a;border:1px solid #212121;border-radius:3px"></div>
<div class="t" style="left:1450px;top:211.92px;font-size:12.5px;color:#c4c4c4;">0</div>
<div class="t" style="left:1516px;top:211.92px;font-size:12.5px;color:#a8a8a8;">Z</div>
<div class="a" style="left:1531px;top:208px;width:65px;height:18px;background:#2a2a2a;border:1px solid #212121;border-radius:3px"></div>
<div class="t" style="left:1534px;top:211.92px;font-size:12.5px;color:#c4c4c4;">0</div>
<div class="t" style="left:1347px;top:231.92px;font-size:12.5px;color:#a8a8a8;">X</div>
<div class="a" style="left:1362px;top:228px;width:65px;height:18px;background:#2a2a2a;border:1px solid #212121;border-radius:3px"></div>
<div class="t" style="left:1365px;top:231.92px;font-size:12.5px;color:#c4c4c4;">1</div>
<div class="t" style="left:1432px;top:231.92px;font-size:12.5px;color:#a8a8a8;">Y</div>
<div class="a" style="left:1447px;top:228px;width:65px;height:18px;background:#2a2a2a;border:1px solid #212121;border-radius:3px"></div>
<div class="t" style="left:1450px;top:231.92px;font-size:12.5px;color:#c4c4c4;">1</div>
<div class="t" style="left:1516px;top:231.92px;font-size:12.5px;color:#a8a8a8;">Z</div>
<div class="a" style="left:1531px;top:228px;width:65px;height:18px;background:#2a2a2a;border:1px solid #212121;border-radius:3px"></div>
<div class="t" style="left:1534px;top:231.92px;font-size:12.5px;color:#c4c4c4;">1</div>
<div class="a" style="left:1174px;top:254px;width:426px;height:1px;background:#242424;"></div>
<div class="a" style="left:1174px;top:255px;width:426px;height:22px;background:#3e3e3e;"></div>
<div class="a" style="left:1174px;top:277px;width:426px;height:1px;background:#242424;"></div>
<svg class="a" style="left:1181px;top:261.5px;" width="6" height="9" viewBox="0 0 6 9"><path d="M0 0L6 4.5L0 9Z" fill="#7a7a7a"/></svg>
<svg class="a" style="left:1196px;top:261.0px;" width="13" height="10" viewBox="0 0 13 10"><rect x="0" y="0.5" width="9" height="9" rx="1" fill="#5ec8f5"/><path d="M9.5 4.5L13 1V9L9.5 5.5Z" fill="#5ec8f5"/></svg>
<div class="a" style="left:1214px;top:259.5px;width:14px;height:14px;background:#2a2a2a;border:1px solid #232323;border-radius:2px"></div>
<svg class="a" style="left:1216px;top:261.5px;" width="10" height="10" viewBox="0 0 10 10"><path d="M1.5 5L4 7.5L8.5 2.5" fill="none" stroke="#e0e0e0" stroke-width="1.4"/></svg>
<div class="t" style="left:1234px;top:260.92px;font-size:12.5px;color:#d2d2d2;font-weight:bold;letter-spacing:-0.144px;">Camera</div>
<svg class="a" style="left:1541px;top:260.0px;" width="12" height="12" viewBox="0 0 12 12"><circle cx="6" cy="6" r="5.5" fill="#c4c4c4"/><path d="M4.2 4.6Q4.2 2.8 6 2.8Q7.8 2.8 7.8 4.4Q7.8 5.4 6.6 5.9Q6 6.2 6 7.3" fill="none" stroke="#3e3e3e" stroke-width="1.3"/><rect x="5.3" y="8.3" width="1.4" height="1.4" fill="#3e3e3e"/></svg>
<svg class="a" style="left:1561px;top:260.0px;" width="12" height="12" viewBox="0 0 12 12"><path d="M1 3.8H6M9 3.8H12M0 8.3H3M6 8.3H11" stroke="#c4c4c4" stroke-width="1.3"/><rect x="6.8" y="1" width="1.6" height="5.5" fill="#c4c4c4"/><rect x="3.6" y="5.6" width="1.6" height="5.5" fill="#c4c4c4"/></svg>
<svg class="a" style="left:1585px;top:260.0px;" width="4" height="12" viewBox="0 0 4 12"><rect x="0.9" y="1" width="2.2" height="2.2" rx="0.4" fill="#c4c4c4"/><rect x="0.9" y="5" width="2.2" height="2.2" rx="0.4" fill="#c4c4c4"/><rect x="0.9" y="9" width="2.2" height="2.2" rx="0.4" fill="#c4c4c4"/></svg>
<div class="a" style="left:1174px;top:278px;width:426px;height:21px;background:#3e3e3e;"></div>
<div class="a" style="left:1174px;top:299px;width:426px;height:1px;background:#242424;"></div>
<svg class="a" style="left:1196px;top:282.5px;" width="13" height="13" viewBox="0 0 13 13"><path d="M1.5 9V6.5Q1.5 1.2 6.5 1.2Q11.5 1.2 11.5 6.5V9" fill="none" stroke="#f4b400" stroke-width="1.6"/><rect x="0.5" y="8" width="3" height="5" rx="0.8" fill="#f4b400"/><rect x="9.5" y="8" width="3" height="5" rx="0.8" fill="#f4b400"/></svg>
<div class="a" style="left:1214px;top:282.0px;width:14px;height:14px;background:#2a2a2a;border:1px solid #232323;border-radius:2px"></div>
<svg class="a" style="left:1216px;top:284.0px;" width="10" height="10" viewBox="0 0 10 10"><path d="M1.5 5L4 7.5L8.5 2.5" fill="none" stroke="#e0e0e0" stroke-width="1.4"/></svg>
<div class="t" style="left:1234px;top:283.42px;font-size:12.5px;color:#d2d2d2;font-weight:bold;letter-spacing:-0.250px;">Audio Listener</div>
<svg class="a" style="left:1541px;top:282.5px;" width="12" height="12" viewBox="0 0 12 12"><circle cx="6" cy="6" r="5.5" fill="#c4c4c4"/><path d="M4.2 4.6Q4.2 2.8 6 2.8Q7.8 2.8 7.8 4.4Q7.8 5.4 6.6 5.9Q6 6.2 6 7.3" fill="none" stroke="#3e3e3e" stroke-width="1.3"/><rect x="5.3" y="8.3" width="1.4" height="1.4" fill="#3e3e3e"/></svg>
<svg class="a" style="left:1561px;top:282.5px;" width="12" height="12" viewBox="0 0 12 12"><path d="M1 3.8H6M9 3.8H12M0 8.3H3M6 8.3H11" stroke="#c4c4c4" stroke-width="1.3"/><rect x="6.8" y="1" width="1.6" height="5.5" fill="#c4c4c4"/><rect x="3.6" y="5.6" width="1.6" height="5.5" fill="#c4c4c4"/></svg>
<svg class="a" style="left:1585px;top:282.5px;" width="4" height="12" viewBox="0 0 4 12"><rect x="0.9" y="1" width="2.2" height="2.2" rx="0.4" fill="#c4c4c4"/><rect x="0.9" y="5" width="2.2" height="2.2" rx="0.4" fill="#c4c4c4"/><rect x="0.9" y="9" width="2.2" height="2.2" rx="0.4" fill="#c4c4c4"/></svg>
<div class="a" style="left:1174px;top:300px;width:426px;height:1px;background:#383838;"></div>
<div class="a" style="left:1174px;top:301px;width:426px;height:1px;background:#242424;"></div>
<div class="a" style="left:1174px;top:302px;width:426px;height:21px;background:#3e3e3e;"></div>
<div class="a" style="left:1174px;top:323px;width:426px;height:1px;background:#242424;"></div>
<svg class="a" style="left:1181px;top:308.0px;" width="6" height="9" viewBox="0 0 6 9"><path d="M0 0L6 4.5L0 9Z" fill="#7a7a7a"/></svg>
<svg class="a" style="left:1196px;top:305.5px;" width="12" height="14" viewBox="0 0 12 14"><path d="M0.5 0.5H8L11.5 4V13.5H0.5Z" fill="#e8e8e8"/><path d="M4 3.5L3 11M8 3.5L7 11M1.8 6H10M1.5 8.7H9.7" stroke="#1f7a2a" stroke-width="1.3"/></svg>
<div class="a" style="left:1214px;top:306.0px;width:14px;height:14px;background:#2a2a2a;border:1px solid #232323;border-radius:2px"></div>
<svg class="a" style="left:1216px;top:308.0px;" width="10" height="10" viewBox="0 0 10 10"><path d="M1.5 5L4 7.5L8.5 2.5" fill="none" stroke="#e0e0e0" stroke-width="1.4"/></svg>
<div class="t" style="left:1234px;top:307.42px;font-size:12.5px;color:#d2d2d2;font-weight:bold;letter-spacing:-0.159px;">Universal Additional Camera Data (Script)</div>
<svg class="a" style="left:1541px;top:306.5px;" width="12" height="12" viewBox="0 0 12 12"><circle cx="6" cy="6" r="5.5" fill="#c4c4c4"/><path d="M4.2 4.6Q4.2 2.8 6 2.8Q7.8 2.8 7.8 4.4Q7.8 5.4 6.6 5.9Q6 6.2 6 7.3" fill="none" stroke="#3e3e3e" stroke-width="1.3"/><rect x="5.3" y="8.3" width="1.4" height="1.4" fill="#3e3e3e"/></svg>
<svg class="a" style="left:1561px;top:306.5px;" width="12" height="12" viewBox="0 0 12 12"><path d="M1 3.8H6M9 3.8H12M0 8.3H3M6 8.3H11" stroke="#c4c4c4" stroke-width="1.3"/><rect x="6.8" y="1" width="1.6" height="5.5" fill="#c4c4c4"/><rect x="3.6" y="5.6" width="1.6" height="5.5" fill="#c4c4c4"/></svg>
<svg class="a" style="left:1585px;top:306.5px;" width="4" height="12" viewBox="0 0 4 12"><rect x="0.9" y="1" width="2.2" height="2.2" rx="0.4" fill="#c4c4c4"/><rect x="0.9" y="5" width="2.2" height="2.2" rx="0.4" fill="#c4c4c4"/><rect x="0.9" y="9" width="2.2" height="2.2" rx="0.4" fill="#c4c4c4"/></svg>
<div class="a" style="left:1174px;top:324px;width:426px;height:21px;background:#3e3e3e;"></div>
<div class="a" style="left:1174px;top:345px;width:426px;height:1px;background:#242424;"></div>
<svg class="a" style="left:1181px;top:330.0px;" width="6" height="9" viewBox="0 0 6 9"><path d="M0 0L6 4.5L0 9Z" fill="#7a7a7a"/></svg>
<svg class="a" style="left:1196px;top:327.5px;" width="12" height="14" viewBox="0 0 12 14"><path d="M0.5 0.5H8L11.5 4V13.5H0.5Z" fill="#e8e8e8"/><path d="M4 3.5L3 11M8 3.5L7 11M1.8 6H10M1.5 8.7H9.7" stroke="#1f7a2a" stroke-width="1.3"/></svg>
<div class="a" style="left:1214px;top:328.0px;width:14px;height:14px;background:#2a2a2a;border:1px solid #232323;border-radius:2px"></div>
<svg class="a" style="left:1216px;top:330.0px;" width="10" height="10" viewBox="0 0 10 10"><path d="M1.5 5L4 7.5L8.5 2.5" fill="none" stroke="#e0e0e0" stroke-width="1.4"/></svg>
<div class="t" style="left:1234px;top:329.42px;font-size:12.5px;color:#7baaf2;font-weight:bold;letter-spacing:-0.186px;">Player Camera (Script)</div>
<svg class="a" style="left:1541px;top:328.5px;" width="12" height="12" viewBox="0 0 12 12"><circle cx="6" cy="6" r="5.5" fill="#c4c4c4"/><path d="M4.2 4.6Q4.2 2.8 6 2.8Q7.8 2.8 7.8 4.4Q7.8 5.4 6.6 5.9Q6 6.2 6 7.3" fill="none" stroke="#3e3e3e" stroke-width="1.3"/><rect x="5.3" y="8.3" width="1.4" height="1.4" fill="#3e3e3e"/></svg>
<svg class="a" style="left:1561px;top:328.5px;" width="12" height="12" viewBox="0 0 12 12"><path d="M1 3.8H6M9 3.8H12M0 8.3H3M6 8.3H11" stroke="#c4c4c4" stroke-width="1.3"/><rect x="6.8" y="1" width="1.6" height="5.5" fill="#c4c4c4"/><rect x="3.6" y="5.6" width="1.6" height="5.5" fill="#c4c4c4"/></svg>
<svg class="a" style="left:1585px;top:328.5px;" width="4" height="12" viewBox="0 0 4 12"><rect x="0.9" y="1" width="2.2" height="2.2" rx="0.4" fill="#c4c4c4"/><rect x="0.9" y="5" width="2.2" height="2.2" rx="0.4" fill="#c4c4c4"/><rect x="0.9" y="9" width="2.2" height="2.2" rx="0.4" fill="#c4c4c4"/></svg>
<div class="a" style="left:1273px;top:355px;width:228px;height:22px;background:#585858;border:1px solid #2e2e2e;border-radius:3px"></div>
<div class="t" style="left:1341px;top:360.42px;font-size:12.5px;color:#d2d2d2;letter-spacing:0.128px;">Add Component</div>
<svg class="a" style="left:265px;top:124px" width="907" height="466" viewBox="0 0 907 466"><defs><linearGradient id="sky" x1="0" y1="0" x2="0" y2="1"><stop offset="0" stop-color="#6d83a2"/><stop offset="0.45" stop-color="#8498b2"/><stop offset="0.7" stop-color="#9db0c3"/><stop offset="0.86" stop-color="#b4c3cd"/><stop offset="1" stop-color="#bccad2"/></linearGradient><linearGradient id="skyh" x1="0" y1="0" x2="1" y2="0"><stop offset="0" stop-color="#8aa0bd" stop-opacity="0.25"/><stop offset="0.45" stop-color="#8aa0bd" stop-opacity="0"/><stop offset="1" stop-color="#3a4766" stop-opacity="0.38"/></linearGradient><linearGradient id="fade" x1="0" y1="0" x2="0" y2="1"><stop offset="0" stop-color="#fff"/><stop offset="0.6" stop-color="#fff" stop-opacity="0.5"/><stop offset="0.95" stop-color="#fff" stop-opacity="0"/></linearGradient><mask id="m1" maskUnits="userSpaceOnUse" x="0" y="0" width="907" height="250"><rect x="0" y="0" width="907" height="250" fill="url(#fade)"/></mask><linearGradient id="gnd" x1="0" y1="0" x2="0" y2="1"><stop offset="0" stop-color="#cfcdcf"/><stop offset="0.25" stop-color="#c7c4c3"/><stop offset="0.6" stop-color="#bfbbba"/><stop offset="1" stop-color="#b6b2b0"/></linearGradient><linearGradient id="torso" x1="0" y1="0" x2="1" y2="0"><stop offset="0" stop-color="#9ca7b4"/><stop offset="1" stop-color="#8d99a7"/></linearGradient><linearGradient id="torsov" x1="0" y1="0" x2="0" y2="1"><stop offset="0" stop-color="#5a6678" stop-opacity="0"/><stop offset="0.5" stop-color="#5a6678" stop-opacity="0"/><stop offset="1" stop-color="#5a6678" stop-opacity="0.22"/></linearGradient><linearGradient id="body" x1="0" y1="0" x2="0" y2="1"><stop offset="0" stop-color="#77828f"/><stop offset="0.22" stop-color="#86919e"/><stop offset="1" stop-color="#8a95a2"/></linearGradient><linearGradient id="legs" x1="0" y1="0" x2="0" y2="1"><stop offset="0" stop-color="#8592a3"/><stop offset="1" stop-color="#7f8c9d"/></linearGradient></defs><rect x="0" y="0" width="907" height="250" fill="url(#sky)"/><rect x="0" y="0" width="907" height="250" fill="url(#skyh)" mask="url(#m1)"/><rect x="0" y="238" width="907" height="228" fill="url(#gnd)"/><polygon points="0.0,213.0 255.0,218.0 255.0,242.0 0.0,242.0" fill="#56636b"/><rect x="18" y="214.4" width="1" height="26.6" fill="#46515a" opacity="0.6"/><rect x="45" y="214.9" width="1" height="26.1" fill="#46515a" opacity="0.6"/><rect x="75" y="215.5" width="1" height="25.5" fill="#46515a" opacity="0.6"/><rect x="107" y="216.1" width="1" height="24.9" fill="#46515a" opacity="0.6"/><rect x="145" y="216.8" width="1" height="24.2" fill="#46515a" opacity="0.6"/><rect x="180" y="217.5" width="1" height="23.5" fill="#46515a" opacity="0.6"/><rect x="213" y="218.2" width="1" height="22.8" fill="#46515a" opacity="0.6"/><rect x="235" y="218.6" width="1" height="22.4" fill="#46515a" opacity="0.6"/><polygon points="625.0,218.0 907.0,213.0 907.0,241.0 625.0,240.0" fill="#b3afab"/><rect x="643" y="218.7" width="1" height="21.3" fill="#a7a39f"/><rect x="660" y="218.4" width="1" height="21.6" fill="#a7a39f"/><rect x="695" y="217.8" width="1" height="22.2" fill="#a7a39f"/><rect x="722" y="217.3" width="1" height="22.7" fill="#a7a39f"/><rect x="739" y="217.0" width="1" height="23.0" fill="#a7a39f"/><rect x="780" y="216.3" width="1" height="23.7" fill="#a7a39f"/><rect x="800" y="215.9" width="1" height="24.1" fill="#a7a39f"/><rect x="835" y="215.3" width="1" height="24.7" fill="#a7a39f"/><rect x="865" y="214.7" width="1" height="25.3" fill="#a7a39f"/><rect x="895" y="214.2" width="1" height="25.8" fill="#a7a39f"/><line x1="66.91139240506328" y1="248" x2="456" y2="466" stroke="#756a60" stroke-width="2.2" stroke-opacity="0.6"/><line x1="110.2372093023256" y1="248" x2="907" y2="444" stroke="#756a60" stroke-width="1.8" stroke-opacity="0.5"/><line x1="153.33333333333331" y1="248" x2="907" y2="367" stroke="#756a60" stroke-width="1.2" stroke-opacity="0.35"/><line x1="195.00975609756097" y1="248" x2="907" y2="331.5" stroke="#756a60" stroke-width="1.0" stroke-opacity="0.28"/><line x1="254.76119402985069" y1="246" x2="907" y2="296" stroke="#756a60" stroke-width="0.9" stroke-opacity="0.22"/><line x1="345.1428571428571" y1="244" x2="907" y2="271" stroke="#756a60" stroke-width="0.7" stroke-opacity="0.15"/><line x1="26.013698630137014" y1="244" x2="-1" y2="302" stroke="#756a60" stroke-width="1.5" stroke-opacity="0.45"/><line x1="817.2511627906977" y1="242" x2="-1" y2="448" stroke="#756a60" stroke-width="2.0" stroke-opacity="0.55"/><line x1="774.5714285714287" y1="242" x2="-1" y2="331" stroke="#756a60" stroke-width="1.4" stroke-opacity="0.4"/><line x1="858.4915254237287" y1="242" x2="907" y2="321.5" stroke="#756a60" stroke-width="1.5" stroke-opacity="0.45"/><ellipse cx="12" cy="428" rx="6.5" ry="2.2" fill="#4f5552" opacity="0.45"/><ellipse cx="22" cy="383" rx="5.2" ry="1.8" fill="#4f5552" opacity="0.45"/><ellipse cx="30" cy="308" rx="3.9" ry="1.4" fill="#4f5552" opacity="0.45"/><ellipse cx="65" cy="273" rx="3.9" ry="1.4" fill="#4f5552" opacity="0.45"/><ellipse cx="107" cy="339" rx="3.9" ry="1.4" fill="#4f5552" opacity="0.45"/><ellipse cx="127" cy="402" rx="3.9" ry="1.4" fill="#4f5552" opacity="0.45"/><ellipse cx="165" cy="301" rx="2.6" ry="0.9" fill="#4f5552" opacity="0.45"/><ellipse cx="191" cy="386" rx="3.9" ry="1.4" fill="#4f5552" opacity="0.45"/><ellipse cx="204" cy="290" rx="2.6" ry="0.9" fill="#4f5552" opacity="0.45"/><ellipse cx="240" cy="309" rx="2.6" ry="0.9" fill="#4f5552" opacity="0.45"/><ellipse cx="256" cy="345" rx="3.9" ry="1.4" fill="#4f5552" opacity="0.45"/><ellipse cx="280" cy="367" rx="3.9" ry="1.4" fill="#4f5552" opacity="0.45"/><ellipse cx="288" cy="309" rx="2.6" ry="0.9" fill="#4f5552" opacity="0.45"/><ellipse cx="325" cy="280" rx="2.6" ry="0.9" fill="#4f5552" opacity="0.45"/><ellipse cx="335" cy="331" rx="3.9" ry="1.4" fill="#4f5552" opacity="0.45"/><ellipse cx="352" cy="384" rx="3.9" ry="1.4" fill="#4f5552" opacity="0.45"/><ellipse cx="372" cy="301" rx="2.6" ry="0.9" fill="#4f5552" opacity="0.45"/><ellipse cx="394" cy="278" rx="2.6" ry="0.9" fill="#4f5552" opacity="0.45"/><ellipse cx="429" cy="416" rx="3.9" ry="1.4" fill="#4f5552" opacity="0.45"/><ellipse cx="470" cy="327" rx="2.6" ry="0.9" fill="#4f5552" opacity="0.45"/><ellipse cx="492" cy="365" rx="3.9" ry="1.4" fill="#4f5552" opacity="0.45"/><ellipse cx="515" cy="306" rx="2.6" ry="0.9" fill="#4f5552" opacity="0.45"/><ellipse cx="527" cy="391" rx="3.9" ry="1.4" fill="#4f5552" opacity="0.45"/><ellipse cx="579" cy="281" rx="2.6" ry="0.9" fill="#4f5552" opacity="0.45"/><ellipse cx="593" cy="365" rx="3.9" ry="1.4" fill="#4f5552" opacity="0.45"/><ellipse cx="603" cy="399" rx="3.9" ry="1.4" fill="#4f5552" opacity="0.45"/><ellipse cx="614" cy="334" rx="2.6" ry="0.9" fill="#4f5552" opacity="0.45"/><ellipse cx="652" cy="309" rx="2.6" ry="0.9" fill="#4f5552" opacity="0.45"/><ellipse cx="676" cy="338" rx="3.9" ry="1.4" fill="#4f5552" opacity="0.45"/><ellipse cx="715" cy="401" rx="3.9" ry="1.4" fill="#4f5552" opacity="0.45"/><ellipse cx="761" cy="280" rx="2.6" ry="0.9" fill="#4f5552" opacity="0.45"/><ellipse cx="763" cy="371" rx="3.9" ry="1.4" fill="#4f5552" opacity="0.45"/><ellipse cx="799" cy="309" rx="2.6" ry="0.9" fill="#4f5552" opacity="0.45"/><ellipse cx="827" cy="353" rx="3.9" ry="1.4" fill="#4f5552" opacity="0.45"/><ellipse cx="853" cy="322" rx="2.6" ry="0.9" fill="#4f5552" opacity="0.45"/><ellipse cx="874" cy="342" rx="3.9" ry="1.4" fill="#4f5552" opacity="0.45"/><ellipse cx="885" cy="371" rx="2.6" ry="0.9" fill="#4f5552" opacity="0.45"/><polygon points="219.0,240.0 219.0,238.0 223.0,238.0 223.0,236.0 227.0,236.0 227.0,234.0 232.0,234.0 232.0,232.0 237.0,232.0 237.0,230.0 242.0,230.0 242.0,228.0 247.0,228.0 247.0,226.0 252.0,226.0 252.0,224.0 256.0,224.0 256.0,222.0 261.0,222.0 261.0,218.0 275.0,218.0 275.0,217.0 290.0,217.0 290.0,216.0 305.0,216.0 305.0,215.0 320.0,215.0 320.0,214.0 335.0,214.0 335.0,213.0 345.0,213.0 345.0,211.0 349.0,211.0 349.0,209.0 353.0,209.0 353.0,207.0 357.0,207.0 357.0,205.0 361.0,205.0 361.0,203.0 367.0,203.0 367.0,201.0 375.0,201.0 375.0,199.0 385.0,199.0 385.0,197.0 395.0,197.0 395.0,196.0 455.0,196.0 455.0,248.0 335.0,245.0 275.0,243.0 219.0,241.0" fill="#3b3439"/><polygon points="455.0,196.0 507.0,196.0 507.0,197.0 513.0,197.0 513.0,199.0 517.0,199.0 517.0,201.0 521.0,201.0 521.0,203.0 525.0,203.0 525.0,205.0 529.0,205.0 529.0,207.0 533.0,207.0 533.0,210.0 548.0,210.0 548.0,211.0 565.0,211.0 565.0,213.0 585.0,213.0 585.0,214.0 595.0,214.0 595.0,215.5 612.0,215.5 612.0,217.0 627.0,217.0 627.0,219.0 632.0,219.0 632.0,221.0 637.0,221.0 637.0,223.0 641.0,223.0 641.0,225.0 645.0,225.0 645.0,227.0 649.0,227.0 649.0,229.0 653.0,229.0 653.0,231.0 657.0,231.0 657.0,233.0 661.0,233.0 661.0,235.0 665.0,235.0 665.0,237.0 669.0,237.0 669.0,239.0 635.0,240.0 535.0,245.0 455.0,248.0" fill="#16181f"/><rect x="242" y="234" width="5" height="1" fill="#6b5f63" opacity="0.6"/><rect x="255" y="236" width="5" height="1" fill="#6b5f63" opacity="0.6"/><rect x="283" y="239" width="5" height="1" fill="#6b5f63" opacity="0.6"/><rect x="317" y="238" width="5" height="1" fill="#6b5f63" opacity="0.6"/><rect x="333" y="241" width="5" height="1" fill="#6b5f63" opacity="0.6"/><rect x="385" y="239" width="5" height="1" fill="#6b5f63" opacity="0.6"/><rect x="408" y="239" width="5" height="1" fill="#6b5f63" opacity="0.6"/><rect x="460" y="240" width="5" height="1" fill="#6b5f63" opacity="0.6"/><rect x="495" y="238" width="5" height="1" fill="#6b5f63" opacity="0.6"/><rect x="535" y="239" width="5" height="1" fill="#6b5f63" opacity="0.6"/><rect x="555" y="239" width="5" height="1" fill="#6b5f63" opacity="0.6"/><rect x="586" y="242" width="5" height="1" fill="#6b5f63" opacity="0.6"/><rect x="615" y="241" width="5" height="1" fill="#6b5f63" opacity="0.6"/><rect x="101" y="223" width="54" height="39" fill="#1a4d5f"/><rect x="101" y="223" width="5" height="39" fill="#569cad"/><rect x="106" y="223" width="25" height="19" fill="#1c4b5d"/><rect x="131" y="223" width="24" height="19" fill="#1a3e4d"/><rect x="106" y="242" width="25" height="20" fill="#173a4a"/><rect x="131" y="242" width="24" height="20" fill="#1b4b5d"/><polygon points="155.0,259.0 179.0,260.0 175.0,262.0 155.0,262.0" fill="#8e98a6" opacity="0.8"/><polygon points="443.0,332.0 460.0,331.0 535.0,334.0 651.0,338.0 670.0,349.5 585.0,349.5 581.0,343.0 495.0,341.0 455.0,336.0" fill="#52668a"/><rect x="453" y="233" width="26" height="13" fill="#1a1c22"/><rect x="453" y="233" width="2" height="13" fill="#2e9a3c"/><rect x="475" y="233" width="4" height="13" fill="#2b8f36"/><rect x="430" y="234" width="21" height="82" fill="url(#legs)"/><rect x="455" y="234" width="21" height="82" fill="url(#legs)"/><rect x="414" y="173" width="18" height="62" fill="#8f99a5"/><rect x="475" y="173" width="18" height="62" fill="#8a94a0"/><rect x="430" y="170" width="47" height="65" fill="url(#body)"/><rect x="432" y="126" width="43" height="43" fill="#808b98"/><rect x="432" y="169" width="43" height="1" fill="#5b5450"/></svg>
<div class="a" style="left:0;top:592px;width:81px;height:24px;background:#3c3c3c;border-radius:0 4px 0 0"></div>
<svg class="a" style="left:9px;top:599px;" width="13" height="11" viewBox="0 0 13 11"><path d="M0 0.5H5L6.5 2.5H13V11H0Z" fill="#c4c4c4"/></svg>
<div class="t" style="left:25px;top:599.42px;font-size:12.5px;color:#c4c4c4;letter-spacing:0.157px;">Project</div>
<svg class="a" style="left:92px;top:598px;" width="11" height="13" viewBox="0 0 11 13"><rect x="0" y="0" width="11" height="13" rx="1" fill="#c4c4c4"/><path d="M2 3H9M2 5.5H9M2 8H7M2 10.5H9" stroke="#151515" stroke-width="1.2"/></svg>
<div class="t" style="left:107px;top:599.42px;font-size:12.5px;color:#c4c4c4;letter-spacing:0.020px;">Console</div>
<svg class="a" style="left:1137px;top:598px;" width="10" height="12" viewBox="0 0 10 12"><path d="M1.3 6V3.6Q1.3 1.1 4.2 1.1Q7.1 1.1 7.1 3.4" fill="none" stroke="#c4c4c4" stroke-width="1.2"/><rect x="0.6" y="6.2" width="8.4" height="5" rx="0.8" fill="none" stroke="#c4c4c4" stroke-width="1.2"/></svg>
<svg class="a" style="left:1156px;top:599px;" width="4" height="12" viewBox="0 0 4 12"><rect x="0.9" y="1" width="2.2" height="2.2" rx="0.4" fill="#c4c4c4"/><rect x="0.9" y="5" width="2.2" height="2.2" rx="0.4" fill="#c4c4c4"/><rect x="0.9" y="9" width="2.2" height="2.2" rx="0.4" fill="#c4c4c4"/></svg>
<div class="a" style="left:0px;top:616px;width:1172px;height:20px;background:#3c3c3c;"></div>
<svg class="a" style="left:7px;top:620px;" width="12" height="12" viewBox="0 0 12 12"><path d="M6 0V12M0 6H12" stroke="#c4c4c4" stroke-width="1.6"/></svg>
<svg class="a" style="left:23px;top:624px;" width="7" height="4" viewBox="0 0 7 4"><path d="M0 0H7L3.5 4Z" fill="#c4c4c4"/></svg>
<div class="a" style="left:706px;top:619px;width:318px;height:15px;background:#303030;border:1px solid #212121;border-radius:3px"></div>
<div class="a" style="left:707px;top:620px;width:299px;height:13px;background:#2a2a2a;"></div>
<svg class="a" style="left:710px;top:621px;" width="9" height="9" viewBox="0 0 9 9"><circle cx="3.5" cy="3.5" r="2.3" fill="none" stroke="#c4c4c4" stroke-width="1.3"/><path d="M5.2 5.2L8 8" stroke="#c4c4c4" stroke-width="1.5"/></svg>
<svg class="a" style="left:1009px;top:620px;" width="13" height="12" viewBox="0 0 13 12"><rect x="3.5" y="0.5" width="9" height="9" rx="1" fill="none" stroke="#c4c4c4" stroke-width="1"/><rect x="0.5" y="7.5" width="4" height="4" fill="#303030" stroke="#c4c4c4" stroke-width="1"/><path d="M4.5 7.5L10 2.5M7 2.5H10V5.5" fill="none" stroke="#c4c4c4" stroke-width="1"/></svg>
<div class="a" style="left:1026px;top:616px;width:1px;height:20px;background:#2a2a2a;"></div>
<div class="a" style="left:1052px;top:616px;width:1px;height:20px;background:#2a2a2a;"></div>
<div class="a" style="left:1078px;top:616px;width:1px;height:20px;background:#2a2a2a;"></div>
<div class="a" style="left:1104px;top:616px;width:1px;height:20px;background:#2a2a2a;"></div>
<div class="a" style="left:1130px;top:616px;width:1px;height:20px;background:#2a2a2a;"></div>
<svg class="a" style="left:1032px;top:619px;" width="12" height="13" viewBox="0 0 12 13"><rect x="1" y="0.5" width="5" height="5" fill="#c4c4c4"/><circle cx="4" cy="9" r="3.5" fill="#c4c4c4"/><path d="M8.5 3L12 9H5Z" fill="#c4c4c4"/></svg>
<svg class="a" style="left:1058px;top:620px;" width="12" height="12" viewBox="0 0 12 12"><path d="M5 0.5H11.5V7L6 12.5L0 6.5Z" fill="#c4c4c4"/><circle cx="8.8" cy="3.2" r="1.1" fill="#3c3c3c"/></svg>
<svg class="a" style="left:1083px;top:619px;" width="13" height="13" viewBox="0 0 13 13"><circle cx="6.5" cy="6.5" r="6.5" fill="#c4c4c4"/><rect x="5.6" y="2.5" width="1.8" height="5.5" fill="#3c3c3c"/><rect x="5.6" y="9" width="1.8" height="1.8" fill="#3c3c3c"/></svg>
<svg class="a" style="left:1110px;top:619px;" width="13" height="13" viewBox="0 0 13 13"><path d="M6.5 0.5L8.3 4.6L12.8 4.9L9.3 7.8L10.5 12.3L6.5 9.8L2.5 12.3L3.7 7.8L0.2 4.9L4.7 4.6Z" fill="#8a8a8a"/></svg>
<svg class="a" style="left:1136px;top:621px;" width="14" height="9" viewBox="0 0 14 9"><path d="M0.7 4.5Q7 -2 13.3 4.5Q7 11 0.7 4.5Z" fill="none" stroke="#8a8a8a" stroke-width="1.2"/><circle cx="7" cy="4.5" r="2" fill="#8a8a8a"/></svg>
<div class="t" style="left:1152px;top:621.42px;font-size:12.5px;color:#c4c4c4;letter-spacing:0.548px;">26</div>
<div class="a" style="left:0px;top:636px;width:1172px;height:1px;background:#232323;"></div>
<div class="a" style="left:0px;top:637px;width:215px;height:201px;background:#383838;"></div>
<div class="a" style="left:215px;top:637px;width:13px;height:201px;background:#333333;"></div>
<div class="a" style="left:216px;top:653px;width:10px;height:83px;background:#5a5a5a;border-radius:5px"></div>
<svg class="a" style="left:216px;top:641px;" width="9" height="6" viewBox="0 0 9 6"><path d="M0.5 5.5H8.5L4.5 0.5Z" fill="#c4c4c4"/></svg>
<svg class="a" style="left:216px;top:827px;" width="9" height="6" viewBox="0 0 9 6"><path d="M0.5 0.5H8.5L4.5 5.5Z" fill="#c4c4c4"/></svg>
<div class="a" style="left:227px;top:637px;width:1px;height:201px;background:#262626;"></div>
<svg class="a" style="left:4px;top:642px;" width="9" height="6" viewBox="0 0 9 6"><path d="M0 0H9L4.5 6Z" fill="#7a7a7a"/></svg>
<svg class="a" style="left:18px;top:639px;" width="12" height="12" viewBox="0 0 12 12"><path d="M6 0.5L7.6 4.3L11.7 4.5L8.5 7.1L9.6 11.3L6 9L2.4 11.3L3.5 7.1L0.3 4.5L4.4 4.3Z" fill="#c4c4c4"/></svg>
<div class="t" style="left:35px;top:639.42px;font-size:12.5px;color:#d2d2d2;font-weight:bold;letter-spacing:-0.286px;">Favorites</div>
<svg class="a" style="left:32px;top:655px;" width="13" height="13" viewBox="0 0 13 13"><circle cx="5" cy="5" r="4" fill="none" stroke="#c4c4c4" stroke-width="1.3"/><path d="M8 8L12.3 12.3" stroke="#c4c4c4" stroke-width="1.6"/></svg>
<div class="t" style="left:48px;top:655.42px;font-size:12.5px;color:#c4c4c4;letter-spacing:0.071px;">All Materials</div>
<svg class="a" style="left:32px;top:671px;" width="13" height="13" viewBox="0 0 13 13"><circle cx="5" cy="5" r="4" fill="none" stroke="#c4c4c4" stroke-width="1.3"/><path d="M8 8L12.3 12.3" stroke="#c4c4c4" stroke-width="1.6"/></svg>
<div class="t" style="left:48px;top:671.42px;font-size:12.5px;color:#c4c4c4;letter-spacing:0.034px;">All Models</div>
<svg class="a" style="left:32px;top:687px;" width="13" height="13" viewBox="0 0 13 13"><circle cx="5" cy="5" r="4" fill="none" stroke="#c4c4c4" stroke-width="1.3"/><path d="M8 8L12.3 12.3" stroke="#c4c4c4" stroke-width="1.6"/></svg>
<div class="t" style="left:48px;top:687.42px;font-size:12.5px;color:#c4c4c4;letter-spacing:-0.040px;">All Prefabs</div>
<svg class="a" style="left:4px;top:720px;" width="9" height="6" viewBox="0 0 9 6"><path d="M0 0H9L4.5 6Z" fill="#7a7a7a"/></svg>
<svg class="a" style="left:18px;top:717px;" width="14" height="11" viewBox="0 0 14 11"><path d="M0.6 10.5V1H5L6.5 2.8H12V4.5" fill="none" stroke="#c4c4c4" stroke-width="1.2"/><path d="M0.6 10.5L3 5H13.8L11.4 10.5Z" fill="#c4c4c4"/></svg>
<div class="t" style="left:35px;top:718.42px;font-size:12.5px;color:#d2d2d2;font-weight:bold;letter-spacing:-0.166px;">Assets</div>
<svg class="a" style="left:32px;top:734px;" width="13" height="11" viewBox="0 0 13 11"><path d="M0 0.5H5L6.5 2.5H13V11H0Z" fill="#c4c4c4"/></svg>
<div class="t" style="left:48px;top:734.42px;font-size:12.5px;color:#c4c4c4;letter-spacing:-0.083px;">Resources</div>
<svg class="a" style="left:32px;top:750px;" width="13" height="11" viewBox="0 0 13 11"><path d="M0 0.5H5L6.5 2.5H13V11H0Z" fill="#c4c4c4"/></svg>
<div class="t" style="left:48px;top:750.42px;font-size:12.5px;color:#c4c4c4;letter-spacing:0.229px;">Settings</div>
<svg class="a" style="left:19px;top:767px;" width="6" height="9" viewBox="0 0 6 9"><path d="M0 0L6 4.5L0 9Z" fill="#7a7a7a"/></svg>
<svg class="a" style="left:32px;top:766px;" width="13" height="11" viewBox="0 0 13 11"><path d="M0 0.5H5L6.5 2.5H13V11H0Z" fill="#c4c4c4"/></svg>
<div class="t" style="left:48px;top:766.42px;font-size:12.5px;color:#c4c4c4;letter-spacing:0.132px;">TextMesh Pro</div>
<svg class="a" style="left:18px;top:785px;" width="9" height="6" viewBox="0 0 9 6"><path d="M0 0H9L4.5 6Z" fill="#7a7a7a"/></svg>
<svg class="a" style="left:32px;top:782px;" width="14" height="11" viewBox="0 0 14 11"><path d="M0.6 10.5V1H5L6.5 2.8H12V4.5" fill="none" stroke="#c4c4c4" stroke-width="1.2"/><path d="M0.6 10.5L3 5H13.8L11.4 10.5Z" fill="#c4c4c4"/></svg>
<div class="t" style="left:48px;top:782.42px;font-size:12.5px;color:#c4c4c4;letter-spacing:0.038px;">VoxelPlayerController</div>
<svg class="a" style="left:46px;top:798px;" width="13" height="11" viewBox="0 0 13 11"><path d="M0 0.5H5L6.5 2.5H13V11H0Z" fill="#c4c4c4"/></svg>
<div class="t" style="left:62px;top:798.42px;font-size:12.5px;color:#c4c4c4;letter-spacing:-0.037px;">Audios</div>
<svg class="a" style="left:46px;top:814px;" width="13" height="11" viewBox="0 0 13 11"><path d="M0 0.5H5L6.5 2.5H13V11H0Z" fill="#c4c4c4"/></svg>
<div class="t" style="left:62px;top:814.42px;font-size:12.5px;color:#c4c4c4;letter-spacing:-0.027px;">HUD</div>
<svg class="a" style="left:46px;top:830px;" width="13" height="11" viewBox="0 0 13 11"><path d="M0 0.5H5L6.5 2.5H13V11H0Z" fill="#c4c4c4"/></svg>
<div class="t" style="left:62px;top:830.42px;font-size:12.5px;color:#c4c4c4;letter-spacing:0.159px;">InputSystemSuport</div>
<div class="a" style="left:228px;top:637px;width:944px;height:20px;background:#3e3e3e;"></div>
<div class="a" style="left:228px;top:657px;width:944px;height:160px;background:#333333;"></div>
<div class="a" style="left:228px;top:817px;width:944px;height:21px;background:#3e3e3e;"></div>
<div class="t" style="left:232px;top:641.42px;font-size:12.5px;color:#c4c4c4;letter-spacing:0.081px;">Assets</div>
<svg class="a" style="left:276px;top:643px;" width="6" height="9" viewBox="0 0 6 9"><path d="M1 0.5L5 4.5L1 8.5" fill="none" stroke="#a0a0a0" stroke-width="1.2"/></svg>
<div class="t" style="left:288px;top:641.42px;font-size:12.5px;color:#c4c4c4;letter-spacing:0.038px;">VoxelPlayerController</div>
<svg class="a" style="left:415px;top:643px;" width="6" height="9" viewBox="0 0 6 9"><path d="M1 0.5L5 4.5L1 8.5" fill="none" stroke="#a0a0a0" stroke-width="1.2"/></svg>
<div class="t" style="left:427px;top:641.42px;font-size:12.5px;color:#d2d2d2;font-weight:bold;letter-spacing:-0.168px;">ScriptVoxel</div>
<svg class="a" style="left:251px;top:680px;" width="52" height="44" viewBox="0 0 52 44"><path d="M2.5 0H22L28 9.5H49.5Q52 9.5 52 12V41.5Q52 44 49.5 44H2.5Q0 44 0 41.5V2.5Q0 0 2.5 0Z" fill="#c4c4c4"/></svg>
<div class="t" style="left:265px;top:739.77px;font-size:11.5px;color:#c4c4c4;letter-spacing:-0.619px;">Arma</div>
<svg class="a" style="left:332px;top:680px;" width="52" height="44" viewBox="0 0 52 44"><path d="M2.5 0H22L28 9.5H49.5Q52 9.5 52 12V41.5Q52 44 49.5 44H2.5Q0 44 0 41.5V2.5Q0 0 2.5 0Z" fill="#c4c4c4"/></svg>
<div class="t" style="left:343px;top:739.77px;font-size:11.5px;color:#c4c4c4;letter-spacing:-0.578px;">Debug</div>
<svg class="a" style="left:413px;top:680px;" width="52" height="44" viewBox="0 0 52 44"><path d="M2.5 0H22L28 9.5H49.5Q52 9.5 52 12V41.5Q52 44 49.5 44H2.5Q0 44 0 41.5V2.5Q0 0 2.5 0Z" fill="#c4c4c4"/></svg>
<div class="t" style="left:406px;top:739.77px;font-size:11.5px;color:#c4c4c4;letter-spacing:-0.465px;">HealthSystem</div>
<svg class="a" style="left:494px;top:680px;" width="52" height="44" viewBox="0 0 52 44"><path d="M2.5 0H22L28 9.5H49.5Q52 9.5 52 12V41.5Q52 44 49.5 44H2.5Q0 44 0 41.5V2.5Q0 0 2.5 0Z" fill="#c4c4c4"/></svg>
<div class="t" style="left:510px;top:739.77px;font-size:11.5px;color:#c4c4c4;letter-spacing:-1.093px;">NPC</div>
<svg class="a" style="left:575px;top:680px;" width="52" height="44" viewBox="0 0 52 44"><path d="M2.5 0H22L28 9.5H49.5Q52 9.5 52 12V41.5Q52 44 49.5 44H2.5Q0 44 0 41.5V2.5Q0 0 2.5 0Z" fill="#c4c4c4"/></svg>
<div class="t" style="left:587px;top:739.77px;font-size:11.5px;color:#c4c4c4;letter-spacing:-0.599px;">Player</div>
<div class="a" style="left:1101px;top:827px;width:55px;height:1px;background:#6a6a6a;"></div>
<div class="a" style="left:1130px;top:822px;width:11px;height:11px;border-radius:50%;background:#a8a8a8"></div>
<div class="a" style="left:0px;top:838px;width:1172px;height:2px;background:#171717;"></div>
<div class="a" style="left:0px;top:838px;width:1600px;height:22px;background:#171717;"></div>
<div class="a" style="left:1521px;top:841px;width:1px;height:18px;background:#262626;"></div>
<div class="a" style="left:1547px;top:841px;width:1px;height:18px;background:#262626;"></div>
<div class="a" style="left:1573px;top:841px;width:1px;height:18px;background:#262626;"></div>
<svg class="a" style="left:1527px;top:842px;" width="14" height="14" viewBox="0 0 14 14"><ellipse cx="7" cy="8.5" rx="4.5" ry="5" fill="#b0b0b0"/><circle cx="7" cy="3" r="2.2" fill="#b0b0b0"/><path d="M1 5L3.5 7M13 5L10.5 7M1 13L3.5 11M13 13L10.5 11" stroke="#b0b0b0" stroke-width="1.1"/><path d="M0.5 0.5L13.5 13.5" stroke="#171717" stroke-width="2"/><path d="M1.5 0.5L13.5 12.5" stroke="#b0b0b0" stroke-width="1"/></svg>
<svg class="a" style="left:1553px;top:842px;" width="14" height="14" viewBox="0 0 14 14"><ellipse cx="7" cy="2.5" rx="6" ry="2" fill="#b0b0b0"/><path d="M1 4V6.5Q7 9.5 13 6.5V4Q7 7 1 4Z M1 8V10.5Q7 13.5 13 10.5V8Q7 11 1 8Z" fill="#b0b0b0"/><path d="M1 1L13 13" stroke="#171717" stroke-width="2"/><path d="M1.5 0.8L13.2 12.5" stroke="#b0b0b0" stroke-width="1"/></svg>
<svg class="a" style="left:1578px;top:842px;" width="15" height="15" viewBox="0 0 15 15"><circle cx="7.5" cy="7.5" r="6.7" fill="none" stroke="#b0b0b0" stroke-width="1.2"/><path d="M4.5 7.5L6.8 9.8L10.8 5.3" fill="none" stroke="#b0b0b0" stroke-width="1.3"/></svg>
<div class="a" style="left:0px;top:860px;width:1600px;height:40px;background:#101010;"></div>
<svg class="a" style="left:16px;top:872px;" width="16" height="16" viewBox="0 0 16 16"><path d="M0 2.2L6.5 1.3V7.5H0Z M7.3 1.2L16 0V7.5H7.3Z M0 8.3H6.5V14.6L0 13.8Z M7.3 8.3H16V16L7.3 14.8Z" fill="#ffffff"/></svg>
<div class="a" style="left:100px;top:860px;width:48px;height:40px;background:#2c2c2c;"></div>
<div class="a" style="left:55px;top:898px;width:40px;height:2px;background:#76b9ed;"></div>
<div class="a" style="left:100px;top:898px;width:48px;height:2px;background:#76b9ed;"></div>
<div class="a" style="left:153px;top:898px;width:40px;height:2px;background:#76b9ed;"></div>
<div class="a" style="left:202px;top:898px;width:40px;height:2px;background:#76b9ed;"></div>
<div class="a" style="left:251px;top:898px;width:40px;height:2px;background:#76b9ed;"></div>
<svg class="a" style="left:62px;top:867px;" width="26" height="26" viewBox="0 0 26 26"><defs><linearGradient id="eg" x1="0.1" y1="0.9" x2="0.9" y2="0.1"><stop offset="0" stop-color="#1266c8"/><stop offset="0.55" stop-color="#2b9fe0"/><stop offset="1" stop-color="#62d86a"/></linearGradient></defs><circle cx="13" cy="13" r="12" fill="url(#eg)"/><path d="M4 12Q5 6 12 6Q19 6 20.5 11.5Q21 15 17 15.5H10Q9.5 19.5 14.5 21.5Q19 22.5 23 19.5Q20 25 13 25Q5 25 2.5 18Q2 14 4 12Z" fill="#0d4aa8"/><path d="M9.5 15.5Q10 10.5 14 10.5Q17.5 10.5 18 13Q18 15.5 15 15.5Z" fill="#101010"/></svg>
<svg class="a" style="left:112px;top:866px;" width="28" height="28" viewBox="0 0 28 28"><path d="M12 1L22.5 7V19L12 25L1.5 19V7Z" fill="#4a535e"/><path d="M12 4L19.5 8.3V17.7L12 22L4.5 17.7V8.3Z" fill="#c8cdd4"/><path d="M11.2 4.5H12.8V11.5H11.2Z M6 13L10.8 15.3L9.5 19.2Z M18 13L13.2 15.3L14.5 19.2Z" fill="#4a535e"/><path d="M9 9.5L12 11.3L15 9.5L12 8Z" fill="#6a737e"/><text x="17" y="23.5" font-family="Liberation Sans" font-weight="bold" font-style="italic" font-size="14" fill="#d8dade" stroke="#2c2c2c" stroke-width="0.6">6</text></svg>
<svg class="a" style="left:160px;top:867px;" width="26" height="26" viewBox="0 0 26 26"><path d="M18.5 1L25 4V22L18.5 25L7 14.5L3 17.5L1 16V10L3 8.5L7 11.5Z" fill="#1f8ad2"/><path d="M18.5 6.5V19.5L10.5 13Z" fill="#101010"/><path d="M18.5 1L25 4V22L18.5 25Z" fill="#2aa3ef"/></svg>
<svg class="a" style="left:209px;top:869px;" width="26" height="22" viewBox="0 0 26 22"><path d="M1 2H10L12 4.5H25V20H1Z" fill="#e8b53a"/><path d="M1 7H25V20H1Z" fill="#f8d458"/><rect x="7" y="13" width="12" height="3" fill="#2f7fd6"/><rect x="7" y="13" width="3" height="7" fill="#2f7fd6"/><rect x="16" y="13" width="3" height="7" fill="#2f7fd6"/></svg>
<svg class="a" style="left:257px;top:866px;" width="28" height="28" viewBox="0 0 28 28"><ellipse cx="12" cy="15" rx="11" ry="8.5" fill="#d8e3ea"/><circle cx="6.5" cy="14" r="1.8" fill="#e04040"/><circle cx="10" cy="10.5" r="1.8" fill="#40b040"/><circle cx="15" cy="10.5" r="1.8" fill="#3080e0"/><circle cx="9" cy="19" r="2.5" fill="#101010"/><path d="M14 21L25 4" stroke="#d08030" stroke-width="2.4"/><path d="M23 2L27 0.5L26 5Z" fill="#e8c070"/></svg>
<svg class="a" style="left:1380px;top:874px;" width="13" height="8" viewBox="0 0 13 8"><path d="M0.8 7.2L6.5 1.2L12.2 7.2" fill="none" stroke="#ffffff" stroke-width="1.2"/></svg>
<svg class="a" style="left:1402px;top:873px;" width="18" height="15" viewBox="0 0 18 15"><rect x="4.5" y="1.5" width="12.5" height="9" fill="none" stroke="#fff" stroke-width="1.1"/><path d="M10.7 10.5V13.5M7 14H14.5" stroke="#fff" stroke-width="1.1"/><rect x="0.5" y="0.5" width="5" height="4" fill="#101010" stroke="#fff" stroke-width="1"/><path d="M3 4.5V12.5H4.5" fill="none" stroke="#fff" stroke-width="1"/></svg>
<svg class="a" style="left:1426px;top:873px;" width="17" height="14" viewBox="0 0 17 14"><path d="M0.8 4.5H3.5L7.5 1V13L3.5 9.5H0.8Z" fill="none" stroke="#fff" stroke-width="1.1"/><path d="M10 4.5Q11.5 7 10 9.5M12.5 2.5Q15 7 12.5 11.5M14.8 1Q17.5 7 14.8 13" fill="none" stroke="#fff" stroke-width="1.1"/></svg>
<div class="t" style="left:1455px;top:873.84px;font-size:12px;color:#ffffff;letter-spacing:-2.004px;">ESP</div>
<div class="t" style="left:1501px;top:864.84px;font-size:12px;color:#ffffff;letter-spacing:-0.428px;">11:28</div>
<div class="t" style="left:1486px;top:883.34px;font-size:12px;color:#ffffff;letter-spacing:-0.206px;">20/12/2025</div>
<svg class="a" style="left:1558px;top:868px;" width="26" height="26" viewBox="0 0 26 26"><path d="M0.5 0.5H16.5V11.5H6L3 14.5V11.5H0.5Z" fill="#fff"/><path d="M3 3.5H14M3 6H14M3 8.5H10" stroke="#101010" stroke-width="1.1"/><circle cx="16" cy="17" r="7" fill="#2b2b2b" stroke="#8a8a8a" stroke-width="1"/><text x="13.3" y="21" font-family="Liberation Sans" font-size="11" fill="#fff">1</text></svg>
<div class="a" style="left:1595px;top:860px;width:1px;height:40px;background:#606060;"></div>
</body></html>
